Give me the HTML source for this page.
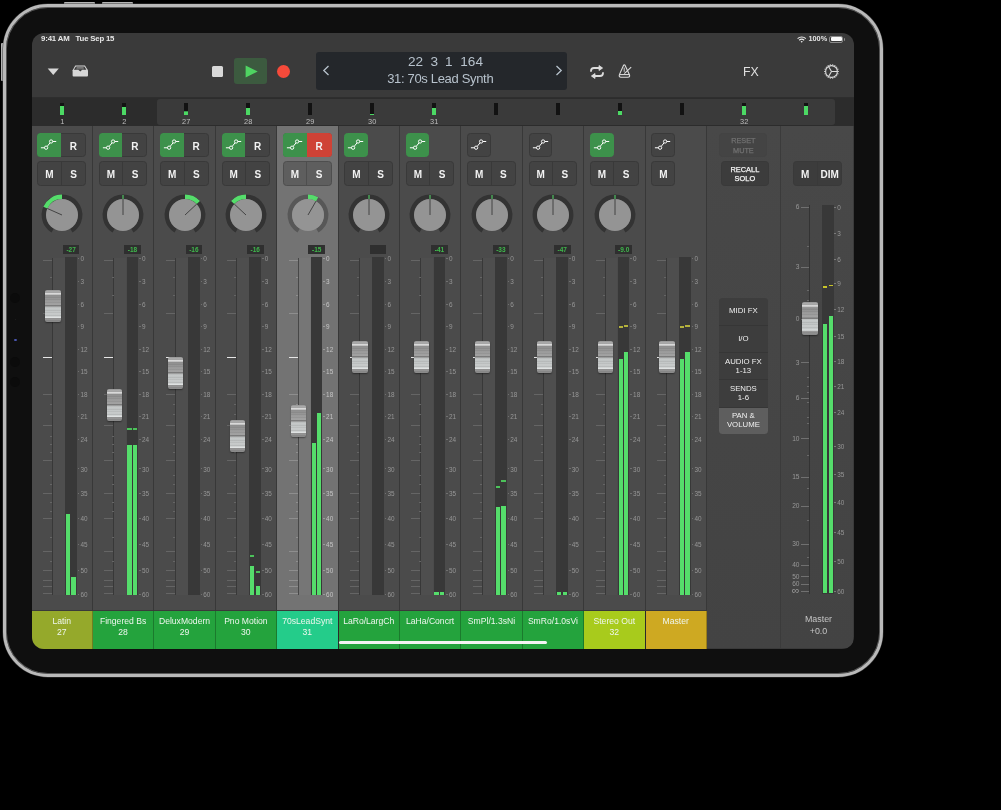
<!DOCTYPE html>
<html><head><meta charset="utf-8"><style>
html,body{margin:0;padding:0;background:#000;width:1001px;height:810px;overflow:hidden}
*{font-family:"Liberation Sans",sans-serif}
.frame{position:absolute;left:2.9px;top:3.6px;width:880.2px;height:673.6px;box-sizing:border-box;border-radius:45px;background:#0f0f0f;border:3.4px solid #b9b9b9;box-shadow:inset 0 0 0 0.9px #5a5a5a, 0 0 0 0.5px #3a3a3a}
.btn{position:absolute;background:#b4b4b4}
.scr{position:absolute;left:32px;top:33px;width:821.5px;height:615.5px;border-radius:12px;overflow:hidden;background:#3a3a3a;will-change:transform}
.a{position:absolute;display:block}
.t{white-space:nowrap;line-height:1.15}
.cap{border-radius:2px;background:repeating-linear-gradient(to bottom,rgba(0,0,0,0) 0px,rgba(0,0,0,0) 1.6px,rgba(0,0,0,0.06) 1.6px,rgba(0,0,0,0.06) 2.6px),linear-gradient(to bottom,#8f8f8f 0%,#a6a6a6 3%,#b0b0b0 8%,#dadada 11%,#cfcfcf 14%,#8f8f8f 17%,#949494 25%,#9c9c9c 35%,#a2a2a2 46%,#767676 49.5%,#8a8a8a 51%,#c9cccc 53%,#c0c4c4 62%,#c8cbcb 72%,#c3c7c7 80%,#dfe2e2 86%,#9a9a9a 89%,#878787 100%);box-shadow:0 1px 1.5px rgba(0,0,0,0.4)}
.dot{position:absolute;border-radius:50%;background:#0b0b0b}
</style></head><body>
<div class="btn" style="left:64px;top:1.8px;width:30.5px;height:3px;border-radius:1px"></div>
<div class="btn" style="left:102px;top:1.8px;width:31px;height:3px;border-radius:1px"></div>
<div class="btn" style="left:1px;top:43px;width:4px;height:37.5px;border-radius:1px"></div>
<div class="frame"></div>
<div class="dot" style="left:10.2px;top:293px;width:10px;height:10px"></div>
<div class="dot" style="left:14.6px;top:319.2px;width:1.3px;height:1.3px;background:#222"></div>
<div class="dot" style="left:13.6px;top:338.6px;width:3px;height:2.6px;background:#4a56b0"></div>
<div class="dot" style="left:10.2px;top:356.5px;width:10px;height:10px"></div>
<div class="dot" style="left:10.2px;top:377.4px;width:10px;height:10px"></div>
<div class="scr">
<div class="a t " style="left:9px;top:2.3px;font-size:7.8px;font-weight:bold;letter-spacing:-0.15px;color:#e8e8e8">9:41 AM</div>
<div class="a t " style="left:43.6px;top:2.3px;font-size:7.8px;font-weight:bold;letter-spacing:-0.2px;color:#e8e8e8">Tue Sep 15</div>
<div class="a t " style="left:776.5px;top:2px;font-size:7.3px;font-weight:bold;color:#e4e4e4">100%</div>
<svg class="a" style="left:765px;top:2.8px;" width="10" height="7" viewBox="0 0 10 7"><path d="M0.6 2.6 A6 6 0 0 1 8.8 2.6" stroke="#eee" stroke-width="1.2" fill="none"/><path d="M2.2 4.2 A3.8 3.8 0 0 1 7.2 4.2" stroke="#eee" stroke-width="1.2" fill="none"/><path d="M3.6 5.6 L4.7 6.8 L5.8 5.6 A1.6 1.6 0 0 0 3.6 5.6Z" fill="#eee"/></svg>
<div class="a " style="left:797.2px;top:2.8px;width:14px;height:6.8px;border:1px solid #8a8a8a;border-radius:2px;box-sizing:border-box;background:#3a3a3a"></div>
<div class="a " style="left:798.5px;top:4.1px;width:11.4px;height:4.2px;background:#fafafa;border-radius:1px"></div>
<div class="a " style="left:811.6px;top:5px;width:1.4px;height:2.6px;background:#8a8a8a;border-radius:0 1px 1px 0"></div>
<svg class="a" style="left:15px;top:35px;" width="13" height="8" viewBox="0 0 13 8"><path d="M0.7 0.4 L11.8 0.4 L6.25 6.9 Z" fill="#d6d6d6"/></svg>
<svg class="a" style="left:39.5px;top:32.4px;" width="16.5" height="12" viewBox="0 0 16.5 12"><path d="M3.3 0.4 L12.9 0.4 L16 5.2 L16 10.6 Q16 11.6 15 11.6 L1.5 11.6 Q0.6 11.6 0.6 10.6 L0.6 5.2 Z" fill="#d6d6d6"/><path d="M3.9 1.5 L12.4 1.5 L14.4 4.8 L10.2 4.8 L8.3 6.6 L6.3 4.8 L1.9 4.8 Z" fill="#3a3a3a"/><rect x="4.6" y="2.2" width="7" height="0.9" fill="#888"/><rect x="4.3" y="3.4" width="7.6" height="0.9" fill="#888"/></svg>
<div class="a " style="left:179.7px;top:32.5px;width:11.3px;height:11.2px;background:#d8d8d8;border-radius:1.5px"></div>
<div class="a " style="left:202px;top:25.1px;width:32.6px;height:26.3px;background:#3c5a3f;border-radius:3px"></div>
<svg class="a" style="left:212.5px;top:32px;" width="13.5" height="13" viewBox="0 0 13.5 13"><path d="M0.6 0.6 L12.7 6.5 L0.6 12.5 Z" fill="#4fd462"/></svg>
<div class="a " style="left:244.7px;top:31.6px;width:13.4px;height:13.4px;background:#f64a3a;border-radius:50%"></div>
<div class="a " style="left:284px;top:19px;width:251px;height:38px;background:#24272b;border-radius:3px"></div>
<div class="a t " style="left:376px;top:21.2px;font-size:13.6px;color:#b7c2cc">22</div>
<div class="a t " style="left:398.4px;top:21.2px;font-size:13.6px;color:#b7c2cc">3</div>
<div class="a t " style="left:413px;top:21.2px;font-size:13.6px;color:#b7c2cc">1</div>
<div class="a t " style="left:428.3px;top:21.2px;font-size:13.6px;color:#b7c2cc">164</div>
<div class="a t " style="left:355.2px;top:38.8px;font-size:13px;letter-spacing:-0.33px;color:#b7c2cc">31: 70s Lead Synth</div>
<svg class="a" style="left:290px;top:32px;" width="8" height="11" viewBox="0 0 8 11"><path d="M6.5 1 L1.8 5.5 L6.5 10" stroke="#b7c2cc" stroke-width="1.3" fill="none"/></svg>
<svg class="a" style="left:523px;top:32px;" width="8" height="11" viewBox="0 0 8 11"><path d="M1.5 1 L6.2 5.5 L1.5 10" stroke="#b7c2cc" stroke-width="1.3" fill="none"/></svg>
<svg class="a" style="left:557px;top:31.5px;" width="16" height="14" viewBox="0 0 16 14"><path d="M2 6 Q2 3 5 3 L12 3" stroke="#dcdcdc" stroke-width="1.8" fill="none" stroke-linecap="round"/><path d="M10 0.5 L13.6 3 L10 5.5 Z" fill="#dcdcdc" stroke="#dcdcdc" stroke-width="0.8" stroke-linejoin="round"/><path d="M14 8 Q14 11 11 11 L4 11" stroke="#dcdcdc" stroke-width="1.8" fill="none" stroke-linecap="round"/><path d="M6 8.5 L2.4 11 L6 13.5 Z" fill="#dcdcdc" stroke="#dcdcdc" stroke-width="0.8" stroke-linejoin="round"/></svg>
<svg class="a" style="left:585.5px;top:30.8px;" width="14" height="14.2" viewBox="0 0 14 14.2"><path d="M5.6 1.2 Q6.3 0.5 7 1.2 L11.2 10.2 Q12.6 13.2 9.8 13.2 L3 13.2 Q0.5 13.2 1.5 10.4 Z" stroke="#dcdcdc" stroke-width="1.1" fill="none" stroke-linejoin="round"/><path d="M1.4 10.6 L11.4 10.6" stroke="#dcdcdc" stroke-width="1.1"/><path d="M6.2 3.6 L6.2 7.8" stroke="#dcdcdc" stroke-width="0.9"/><path d="M6.3 9.6 L13.2 3.2" stroke="#dcdcdc" stroke-width="1.1"/></svg>
<div class="a t " style="left:711px;top:31.6px;font-size:12.3px;color:#e0e0e0">FX</div>
<svg class="a" style="left:792.4px;top:30.9px;" width="15" height="15" viewBox="0 0 15 15"><circle cx="7.5" cy="7.5" r="5.9" stroke="#dcdcdc" stroke-width="1.1" fill="none"/><line x1="13.70" y1="7.50" x2="14.80" y2="7.50" stroke="#dcdcdc" stroke-width="1.1"/><line x1="13.33" y1="9.62" x2="14.36" y2="10.00" stroke="#dcdcdc" stroke-width="1.1"/><line x1="12.25" y1="11.49" x2="13.09" y2="12.19" stroke="#dcdcdc" stroke-width="1.1"/><line x1="10.60" y1="12.87" x2="11.15" y2="13.82" stroke="#dcdcdc" stroke-width="1.1"/><line x1="8.58" y1="13.61" x2="8.77" y2="14.69" stroke="#dcdcdc" stroke-width="1.1"/><line x1="6.42" y1="13.61" x2="6.23" y2="14.69" stroke="#dcdcdc" stroke-width="1.1"/><line x1="4.40" y1="12.87" x2="3.85" y2="13.82" stroke="#dcdcdc" stroke-width="1.1"/><line x1="2.75" y1="11.49" x2="1.91" y2="12.19" stroke="#dcdcdc" stroke-width="1.1"/><line x1="1.67" y1="9.62" x2="0.64" y2="10.00" stroke="#dcdcdc" stroke-width="1.1"/><line x1="1.30" y1="7.50" x2="0.20" y2="7.50" stroke="#dcdcdc" stroke-width="1.1"/><line x1="1.67" y1="5.38" x2="0.64" y2="5.00" stroke="#dcdcdc" stroke-width="1.1"/><line x1="2.75" y1="3.51" x2="1.91" y2="2.81" stroke="#dcdcdc" stroke-width="1.1"/><line x1="4.40" y1="2.13" x2="3.85" y2="1.18" stroke="#dcdcdc" stroke-width="1.1"/><line x1="6.42" y1="1.39" x2="6.23" y2="0.31" stroke="#dcdcdc" stroke-width="1.1"/><line x1="8.58" y1="1.39" x2="8.77" y2="0.31" stroke="#dcdcdc" stroke-width="1.1"/><line x1="10.60" y1="2.13" x2="11.15" y2="1.18" stroke="#dcdcdc" stroke-width="1.1"/><line x1="12.25" y1="3.51" x2="13.09" y2="2.81" stroke="#dcdcdc" stroke-width="1.1"/><line x1="13.33" y1="5.38" x2="14.36" y2="5.00" stroke="#dcdcdc" stroke-width="1.1"/><path d="M7.5 7.5 L13 7.5 M7.5 7.5 L4.7 2.7 M7.5 7.5 L4.7 12.3" stroke="#dcdcdc" stroke-width="1.1"/></svg>
<div class="a " style="left:0px;top:64px;width:821.5px;height:1px;background:#2e2e2e"></div>
<div class="a " style="left:0px;top:65px;width:821.5px;height:28px;background:#2c2c2c"></div>
<div class="a " style="left:125.1px;top:66px;width:678.4px;height:26px;background:#3a3a3a;border-radius:3px"></div>
<div class="a " style="left:28.2px;top:70.4px;width:4px;height:11.6px;background:#121212"></div>
<div class="a " style="left:28.2px;top:73px;width:4px;height:9px;background:#4cd964"></div>
<div class="a t " style="left:20.2px;top:84.6px;width:20px;text-align:center;font-size:7.4px;color:#bdbdbd">1</div>
<div class="a " style="left:90.2px;top:70.4px;width:4px;height:11.6px;background:#121212"></div>
<div class="a " style="left:90.2px;top:74px;width:4px;height:8px;background:#4cd964"></div>
<div class="a t " style="left:82.2px;top:84.6px;width:20px;text-align:center;font-size:7.4px;color:#bdbdbd">2</div>
<div class="a " style="left:152.2px;top:70.4px;width:4px;height:11.6px;background:#121212"></div>
<div class="a " style="left:152.2px;top:79.2px;width:4px;height:2.8px;background:#4cd964"></div>
<div class="a " style="left:152.2px;top:77.8px;width:4px;height:0.8px;background:#3a9a4a"></div>
<div class="a t " style="left:144.2px;top:84.6px;width:20px;text-align:center;font-size:7.4px;color:#bdbdbd">27</div>
<div class="a " style="left:214.2px;top:70.4px;width:4px;height:11.6px;background:#121212"></div>
<div class="a " style="left:214.2px;top:75.4px;width:4px;height:6.6px;background:#4cd964"></div>
<div class="a t " style="left:206.2px;top:84.6px;width:20px;text-align:center;font-size:7.4px;color:#bdbdbd">28</div>
<div class="a " style="left:276.2px;top:70.4px;width:4px;height:11.6px;background:#121212"></div>
<div class="a t " style="left:268.2px;top:84.6px;width:20px;text-align:center;font-size:7.4px;color:#bdbdbd">29</div>
<div class="a " style="left:338.2px;top:70.4px;width:4px;height:11.6px;background:#121212"></div>
<div class="a " style="left:338.2px;top:80.5px;width:4px;height:1.5px;background:#4cd964"></div>
<div class="a t " style="left:330.2px;top:84.6px;width:20px;text-align:center;font-size:7.4px;color:#bdbdbd">30</div>
<div class="a " style="left:400.2px;top:70.4px;width:4px;height:11.6px;background:#121212"></div>
<div class="a " style="left:400.2px;top:75px;width:4px;height:7px;background:#4cd964"></div>
<div class="a t " style="left:392.2px;top:84.6px;width:20px;text-align:center;font-size:7.4px;color:#bdbdbd">31</div>
<div class="a " style="left:462.2px;top:70.4px;width:4px;height:11.6px;background:#121212"></div>
<div class="a " style="left:524.2px;top:70.4px;width:4px;height:11.6px;background:#121212"></div>
<div class="a " style="left:586.2px;top:70.4px;width:4px;height:11.6px;background:#121212"></div>
<div class="a " style="left:586.2px;top:78px;width:4px;height:4px;background:#4cd964"></div>
<div class="a " style="left:648.2px;top:70.4px;width:4px;height:11.6px;background:#121212"></div>
<div class="a " style="left:710.2px;top:70.4px;width:4px;height:11.6px;background:#121212"></div>
<div class="a " style="left:710.2px;top:73px;width:4px;height:9px;background:#4cd964"></div>
<div class="a t " style="left:702.2px;top:84.6px;width:20px;text-align:center;font-size:7.4px;color:#bdbdbd">32</div>
<div class="a " style="left:772.2px;top:70.4px;width:4px;height:11.6px;background:#121212"></div>
<div class="a " style="left:772.2px;top:73px;width:4px;height:9px;background:#4cd964"></div>
<div class="a " style="left:-0.5px;top:93.2px;width:61.4px;height:484.3px;background:#4b4b4b"></div>
<div class="a " style="left:59.9px;top:93.2px;width:1px;height:522.3px;background:#383838"></div>
<div class="a " style="left:5.4px;top:100.1px;width:48.5px;height:23.9px;background:#434343;border-radius:3.5px;border:1px solid #393939;box-sizing:border-box"></div>
<div class="a " style="left:28.9px;top:100.1px;width:25px;height:23.9px;background:transparent;border-radius:0 3.5px 3.5px 0"></div>
<div class="a " style="left:5.4px;top:100.1px;width:23.6px;height:23.9px;background:#3d914b;border-radius:3.5px 0 0 3.5px"></div>
<div class="a t " style="left:29.4px;top:107.9px;width:24px;text-align:center;font-size:10px;font-weight:bold;color:#f2f2f2">R</div>
<svg class="a" style="left:5.4px;top:100.1px;" width="23.6" height="23.9" viewBox="0 0 23.6 23.9"><path d="M3.9 14.8 L7.5 14.8 M10.2 13.4 L13 9.9 M15.7 8.5 L19.2 8.5" stroke="#fff" stroke-width="1" fill="none"/><circle cx="9.1" cy="14.7" r="1.65" stroke="#fff" stroke-width="0.95" fill="none"/><circle cx="14.1" cy="8.5" r="1.65" stroke="#fff" stroke-width="0.95" fill="none"/></svg>
<div class="a " style="left:5.4px;top:128.2px;width:48.5px;height:24.4px;background:#434343;border-radius:3.5px;border:1px solid #393939;box-sizing:border-box"></div>
<div class="a " style="left:28.8px;top:128.2px;width:1px;height:24.4px;background:#393939"></div>
<div class="a t " style="left:5.4px;top:135.8px;width:24px;text-align:center;font-size:10px;font-weight:bold;color:#f2f2f2">M</div>
<div class="a t " style="left:29.6px;top:135.8px;width:24px;text-align:center;font-size:10px;font-weight:bold;color:#f2f2f2">S</div>
<svg class="a" style="left:4.9px;top:156.6px;" width="50" height="50" viewBox="0 0 50 50"><path d="M15.63 40.60 A18.2 18.2 0 1 1 34.37 40.60" stroke="#333333" stroke-width="4.4" fill="none"/><circle cx="25" cy="25" r="16" fill="#949494"/><path d="M25.00 6.80 A18.2 18.2 0 0 0 8.37 17.60" stroke="#55dd6b" stroke-width="4.4" fill="none"/><path d="M25 25 L10.38 18.49" stroke="#3a3a3a" stroke-width="0.9"/></svg>
<div class="a " style="left:30.7px;top:212.3px;width:16.8px;height:8.6px;background:#2f2f2f"></div>
<div class="a t " style="left:30.7px;top:213.2px;width:16.8px;text-align:center;font-size:6.5px;font-weight:bold;line-height:8.8px;color:#3fb84c">-27</div>
<div class="a " style="left:20.8px;top:225px;width:12.1px;height:337px;background:#4e4e4e"></div>
<div class="a " style="left:19.9px;top:224.5px;width:0.85px;height:337px;background:#383838"></div>
<div class="a " style="left:11px;top:226.5px;width:9px;height:1px;background:#656565"></div>
<div class="a " style="left:11px;top:279.5px;width:9px;height:1px;background:#656565"></div>
<div class="a " style="left:11px;top:361px;width:9px;height:1px;background:#656565"></div>
<div class="a " style="left:11px;top:391.8px;width:9px;height:1px;background:#656565"></div>
<div class="a " style="left:11px;top:427px;width:9px;height:1px;background:#656565"></div>
<div class="a " style="left:11px;top:460.2px;width:9px;height:1px;background:#656565"></div>
<div class="a " style="left:11px;top:484.8px;width:9px;height:1px;background:#656565"></div>
<div class="a " style="left:11px;top:518.1px;width:9px;height:1px;background:#656565"></div>
<div class="a " style="left:11px;top:536.5px;width:9px;height:1px;background:#656565"></div>
<div class="a " style="left:11px;top:546.9px;width:9px;height:1px;background:#656565"></div>
<div class="a " style="left:11px;top:552.7px;width:9px;height:1px;background:#656565"></div>
<div class="a " style="left:11px;top:559.8px;width:9px;height:1px;background:#656565"></div>
<div class="a " style="left:18.1px;top:244.2px;width:2px;height:1px;background:#656565"></div>
<div class="a " style="left:18.1px;top:261.7px;width:2px;height:1px;background:#656565"></div>
<div class="a " style="left:18.1px;top:370.8px;width:2px;height:1px;background:#656565"></div>
<div class="a " style="left:18.1px;top:381.2px;width:2px;height:1px;background:#656565"></div>
<div class="a " style="left:18.1px;top:403.2px;width:2px;height:1px;background:#656565"></div>
<div class="a " style="left:18.1px;top:410.9px;width:2px;height:1px;background:#656565"></div>
<div class="a " style="left:18.1px;top:418.7px;width:2px;height:1px;background:#656565"></div>
<div class="a " style="left:18.1px;top:442.1px;width:2px;height:1px;background:#656565"></div>
<div class="a " style="left:18.1px;top:451.4px;width:2px;height:1px;background:#656565"></div>
<div class="a " style="left:18.1px;top:469.4px;width:2px;height:1px;background:#656565"></div>
<div class="a " style="left:18.1px;top:478.3px;width:2px;height:1px;background:#656565"></div>
<div class="a " style="left:18.1px;top:504.3px;width:2px;height:1px;background:#656565"></div>
<div class="a " style="left:18.1px;top:528.1px;width:2px;height:1px;background:#656565"></div>
<div class="a " style="left:11px;top:323.5px;width:9px;height:1.5px;background:#e6e6e6"></div>
<div class="a " style="left:33.2px;top:224.2px;width:11.6px;height:338.2px;background:#383838"></div>
<div class="a " style="left:34px;top:481.2px;width:4.3px;height:80.5px;background:#55dd6b"></div>
<div class="a " style="left:39.3px;top:544px;width:4.6px;height:17.7px;background:#55dd6b"></div>
<div class="a " style="left:45.7px;top:225.1px;width:1.7px;height:0.9px;background:#707070"></div>
<div class="a t " style="left:48.5px;top:222.2px;font-size:6.4px;color:#979797">0</div>
<div class="a " style="left:45.7px;top:247.5px;width:1.7px;height:0.9px;background:#707070"></div>
<div class="a t " style="left:48.5px;top:244.6px;font-size:6.4px;color:#979797">3</div>
<div class="a " style="left:45.7px;top:271px;width:1.7px;height:0.9px;background:#707070"></div>
<div class="a t " style="left:48.5px;top:268.1px;font-size:6.4px;color:#979797">6</div>
<div class="a " style="left:45.7px;top:292.5px;width:1.7px;height:0.9px;background:#707070"></div>
<div class="a t " style="left:48.5px;top:289.6px;font-size:6.4px;color:#979797">9</div>
<div class="a " style="left:45.7px;top:315.7px;width:1.7px;height:0.9px;background:#707070"></div>
<div class="a t " style="left:48.5px;top:312.8px;font-size:6.4px;color:#979797">12</div>
<div class="a " style="left:45.7px;top:338.1px;width:1.7px;height:0.9px;background:#707070"></div>
<div class="a t " style="left:48.5px;top:335.2px;font-size:6.4px;color:#979797">15</div>
<div class="a " style="left:45.7px;top:360.6px;width:1.7px;height:0.9px;background:#707070"></div>
<div class="a t " style="left:48.5px;top:357.7px;font-size:6.4px;color:#979797">18</div>
<div class="a " style="left:45.7px;top:383.2px;width:1.7px;height:0.9px;background:#707070"></div>
<div class="a t " style="left:48.5px;top:380.3px;font-size:6.4px;color:#979797">21</div>
<div class="a " style="left:45.7px;top:405.5px;width:1.7px;height:0.9px;background:#707070"></div>
<div class="a t " style="left:48.5px;top:402.6px;font-size:6.4px;color:#979797">24</div>
<div class="a " style="left:45.7px;top:435.4px;width:1.7px;height:0.9px;background:#707070"></div>
<div class="a t " style="left:48.5px;top:432.5px;font-size:6.4px;color:#979797">30</div>
<div class="a " style="left:45.7px;top:459.9px;width:1.7px;height:0.9px;background:#707070"></div>
<div class="a t " style="left:48.5px;top:457px;font-size:6.4px;color:#979797">35</div>
<div class="a " style="left:45.7px;top:484.6px;width:1.7px;height:0.9px;background:#707070"></div>
<div class="a t " style="left:48.5px;top:481.7px;font-size:6.4px;color:#979797">40</div>
<div class="a " style="left:45.7px;top:511px;width:1.7px;height:0.9px;background:#707070"></div>
<div class="a t " style="left:48.5px;top:508.1px;font-size:6.4px;color:#979797">45</div>
<div class="a " style="left:45.7px;top:536.5px;width:1.7px;height:0.9px;background:#707070"></div>
<div class="a t " style="left:48.5px;top:533.6px;font-size:6.4px;color:#979797">50</div>
<div class="a " style="left:45.7px;top:561.1px;width:1.7px;height:0.9px;background:#707070"></div>
<div class="a t " style="left:48.5px;top:558.2px;font-size:6.4px;color:#979797">60</div>
<div class="a cap" style="left:13.4px;top:257px;width:15.3px;height:32.2px;"></div>
<div class="a " style="left:-0.5px;top:577.5px;width:61.4px;height:38px;background:#95a92b"></div>
<div class="a t " style="left:-0.5px;top:582.6px;width:60.4px;text-align:center;font-size:8.6px;line-height:11.6px;color:#eef6ee">Latin<br>27</div>
<div class="a " style="left:59.9px;top:577.5px;width:1px;height:38px;background:rgba(0,0,0,0.25)"></div>
<div class="a " style="left:60.9px;top:93.2px;width:61.4px;height:484.3px;background:#4b4b4b"></div>
<div class="a " style="left:121.3px;top:93.2px;width:1px;height:522.3px;background:#383838"></div>
<div class="a " style="left:66.8px;top:100.1px;width:48.5px;height:23.9px;background:#434343;border-radius:3.5px;border:1px solid #393939;box-sizing:border-box"></div>
<div class="a " style="left:90.3px;top:100.1px;width:25px;height:23.9px;background:transparent;border-radius:0 3.5px 3.5px 0"></div>
<div class="a " style="left:66.8px;top:100.1px;width:23.6px;height:23.9px;background:#3d914b;border-radius:3.5px 0 0 3.5px"></div>
<div class="a t " style="left:90.8px;top:107.9px;width:24px;text-align:center;font-size:10px;font-weight:bold;color:#f2f2f2">R</div>
<svg class="a" style="left:66.8px;top:100.1px;" width="23.6" height="23.9" viewBox="0 0 23.6 23.9"><path d="M3.9 14.8 L7.5 14.8 M10.2 13.4 L13 9.9 M15.7 8.5 L19.2 8.5" stroke="#fff" stroke-width="1" fill="none"/><circle cx="9.1" cy="14.7" r="1.65" stroke="#fff" stroke-width="0.95" fill="none"/><circle cx="14.1" cy="8.5" r="1.65" stroke="#fff" stroke-width="0.95" fill="none"/></svg>
<div class="a " style="left:66.8px;top:128.2px;width:48.5px;height:24.4px;background:#434343;border-radius:3.5px;border:1px solid #393939;box-sizing:border-box"></div>
<div class="a " style="left:90.2px;top:128.2px;width:1px;height:24.4px;background:#393939"></div>
<div class="a t " style="left:66.8px;top:135.8px;width:24px;text-align:center;font-size:10px;font-weight:bold;color:#f2f2f2">M</div>
<div class="a t " style="left:91px;top:135.8px;width:24px;text-align:center;font-size:10px;font-weight:bold;color:#f2f2f2">S</div>
<svg class="a" style="left:66.3px;top:156.6px;" width="50" height="50" viewBox="0 0 50 50"><path d="M15.63 40.60 A18.2 18.2 0 1 1 34.37 40.60" stroke="#333333" stroke-width="4.4" fill="none"/><circle cx="25" cy="25" r="16" fill="#949494"/><path d="M25 5 L25 9" stroke="#55dd6b" stroke-width="1" /><path d="M25 25 L25.00 9.00" stroke="#3a3a3a" stroke-width="0.9"/></svg>
<div class="a " style="left:92.1px;top:212.3px;width:16.8px;height:8.6px;background:#2f2f2f"></div>
<div class="a t " style="left:92.1px;top:213.2px;width:16.8px;text-align:center;font-size:6.5px;font-weight:bold;line-height:8.8px;color:#3fb84c">-18</div>
<div class="a " style="left:82.2px;top:225px;width:12.1px;height:337px;background:#4e4e4e"></div>
<div class="a " style="left:81.3px;top:224.5px;width:0.85px;height:337px;background:#383838"></div>
<div class="a " style="left:72.4px;top:226.5px;width:9px;height:1px;background:#656565"></div>
<div class="a " style="left:72.4px;top:279.5px;width:9px;height:1px;background:#656565"></div>
<div class="a " style="left:72.4px;top:361px;width:9px;height:1px;background:#656565"></div>
<div class="a " style="left:72.4px;top:391.8px;width:9px;height:1px;background:#656565"></div>
<div class="a " style="left:72.4px;top:427px;width:9px;height:1px;background:#656565"></div>
<div class="a " style="left:72.4px;top:460.2px;width:9px;height:1px;background:#656565"></div>
<div class="a " style="left:72.4px;top:484.8px;width:9px;height:1px;background:#656565"></div>
<div class="a " style="left:72.4px;top:518.1px;width:9px;height:1px;background:#656565"></div>
<div class="a " style="left:72.4px;top:536.5px;width:9px;height:1px;background:#656565"></div>
<div class="a " style="left:72.4px;top:546.9px;width:9px;height:1px;background:#656565"></div>
<div class="a " style="left:72.4px;top:552.7px;width:9px;height:1px;background:#656565"></div>
<div class="a " style="left:72.4px;top:559.8px;width:9px;height:1px;background:#656565"></div>
<div class="a " style="left:79.5px;top:244.2px;width:2px;height:1px;background:#656565"></div>
<div class="a " style="left:79.5px;top:261.7px;width:2px;height:1px;background:#656565"></div>
<div class="a " style="left:79.5px;top:370.8px;width:2px;height:1px;background:#656565"></div>
<div class="a " style="left:79.5px;top:381.2px;width:2px;height:1px;background:#656565"></div>
<div class="a " style="left:79.5px;top:403.2px;width:2px;height:1px;background:#656565"></div>
<div class="a " style="left:79.5px;top:410.9px;width:2px;height:1px;background:#656565"></div>
<div class="a " style="left:79.5px;top:418.7px;width:2px;height:1px;background:#656565"></div>
<div class="a " style="left:79.5px;top:442.1px;width:2px;height:1px;background:#656565"></div>
<div class="a " style="left:79.5px;top:451.4px;width:2px;height:1px;background:#656565"></div>
<div class="a " style="left:79.5px;top:469.4px;width:2px;height:1px;background:#656565"></div>
<div class="a " style="left:79.5px;top:478.3px;width:2px;height:1px;background:#656565"></div>
<div class="a " style="left:79.5px;top:504.3px;width:2px;height:1px;background:#656565"></div>
<div class="a " style="left:79.5px;top:528.1px;width:2px;height:1px;background:#656565"></div>
<div class="a " style="left:72.4px;top:323.5px;width:9px;height:1.5px;background:#e6e6e6"></div>
<div class="a " style="left:94.6px;top:224.2px;width:11.6px;height:338.2px;background:#383838"></div>
<div class="a " style="left:95.4px;top:412.2px;width:4.3px;height:149.5px;background:#55dd6b"></div>
<div class="a " style="left:95.4px;top:394.9px;width:4.3px;height:1.8px;background:#4cc25a"></div>
<div class="a " style="left:100.7px;top:412.2px;width:4.6px;height:149.5px;background:#55dd6b"></div>
<div class="a " style="left:100.7px;top:394.9px;width:4.6px;height:1.8px;background:#4cc25a"></div>
<div class="a " style="left:107.1px;top:225.1px;width:1.7px;height:0.9px;background:#707070"></div>
<div class="a t " style="left:109.9px;top:222.2px;font-size:6.4px;color:#979797">0</div>
<div class="a " style="left:107.1px;top:247.5px;width:1.7px;height:0.9px;background:#707070"></div>
<div class="a t " style="left:109.9px;top:244.6px;font-size:6.4px;color:#979797">3</div>
<div class="a " style="left:107.1px;top:271px;width:1.7px;height:0.9px;background:#707070"></div>
<div class="a t " style="left:109.9px;top:268.1px;font-size:6.4px;color:#979797">6</div>
<div class="a " style="left:107.1px;top:292.5px;width:1.7px;height:0.9px;background:#707070"></div>
<div class="a t " style="left:109.9px;top:289.6px;font-size:6.4px;color:#979797">9</div>
<div class="a " style="left:107.1px;top:315.7px;width:1.7px;height:0.9px;background:#707070"></div>
<div class="a t " style="left:109.9px;top:312.8px;font-size:6.4px;color:#979797">12</div>
<div class="a " style="left:107.1px;top:338.1px;width:1.7px;height:0.9px;background:#707070"></div>
<div class="a t " style="left:109.9px;top:335.2px;font-size:6.4px;color:#979797">15</div>
<div class="a " style="left:107.1px;top:360.6px;width:1.7px;height:0.9px;background:#707070"></div>
<div class="a t " style="left:109.9px;top:357.7px;font-size:6.4px;color:#979797">18</div>
<div class="a " style="left:107.1px;top:383.2px;width:1.7px;height:0.9px;background:#707070"></div>
<div class="a t " style="left:109.9px;top:380.3px;font-size:6.4px;color:#979797">21</div>
<div class="a " style="left:107.1px;top:405.5px;width:1.7px;height:0.9px;background:#707070"></div>
<div class="a t " style="left:109.9px;top:402.6px;font-size:6.4px;color:#979797">24</div>
<div class="a " style="left:107.1px;top:435.4px;width:1.7px;height:0.9px;background:#707070"></div>
<div class="a t " style="left:109.9px;top:432.5px;font-size:6.4px;color:#979797">30</div>
<div class="a " style="left:107.1px;top:459.9px;width:1.7px;height:0.9px;background:#707070"></div>
<div class="a t " style="left:109.9px;top:457px;font-size:6.4px;color:#979797">35</div>
<div class="a " style="left:107.1px;top:484.6px;width:1.7px;height:0.9px;background:#707070"></div>
<div class="a t " style="left:109.9px;top:481.7px;font-size:6.4px;color:#979797">40</div>
<div class="a " style="left:107.1px;top:511px;width:1.7px;height:0.9px;background:#707070"></div>
<div class="a t " style="left:109.9px;top:508.1px;font-size:6.4px;color:#979797">45</div>
<div class="a " style="left:107.1px;top:536.5px;width:1.7px;height:0.9px;background:#707070"></div>
<div class="a t " style="left:109.9px;top:533.6px;font-size:6.4px;color:#979797">50</div>
<div class="a " style="left:107.1px;top:561.1px;width:1.7px;height:0.9px;background:#707070"></div>
<div class="a t " style="left:109.9px;top:558.2px;font-size:6.4px;color:#979797">60</div>
<div class="a cap" style="left:74.8px;top:356px;width:15.3px;height:32.2px;"></div>
<div class="a " style="left:60.9px;top:577.5px;width:61.4px;height:38px;background:#24a33d"></div>
<div class="a t " style="left:60.9px;top:582.6px;width:60.4px;text-align:center;font-size:8.6px;line-height:11.6px;color:#eef6ee">Fingered Bs<br>28</div>
<div class="a " style="left:121.3px;top:577.5px;width:1px;height:38px;background:rgba(0,0,0,0.25)"></div>
<div class="a " style="left:122.3px;top:93.2px;width:61.4px;height:484.3px;background:#4b4b4b"></div>
<div class="a " style="left:182.7px;top:93.2px;width:1px;height:522.3px;background:#383838"></div>
<div class="a " style="left:128.2px;top:100.1px;width:48.5px;height:23.9px;background:#434343;border-radius:3.5px;border:1px solid #393939;box-sizing:border-box"></div>
<div class="a " style="left:151.7px;top:100.1px;width:25px;height:23.9px;background:transparent;border-radius:0 3.5px 3.5px 0"></div>
<div class="a " style="left:128.2px;top:100.1px;width:23.6px;height:23.9px;background:#3d914b;border-radius:3.5px 0 0 3.5px"></div>
<div class="a t " style="left:152.2px;top:107.9px;width:24px;text-align:center;font-size:10px;font-weight:bold;color:#f2f2f2">R</div>
<svg class="a" style="left:128.2px;top:100.1px;" width="23.6" height="23.9" viewBox="0 0 23.6 23.9"><path d="M3.9 14.8 L7.5 14.8 M10.2 13.4 L13 9.9 M15.7 8.5 L19.2 8.5" stroke="#fff" stroke-width="1" fill="none"/><circle cx="9.1" cy="14.7" r="1.65" stroke="#fff" stroke-width="0.95" fill="none"/><circle cx="14.1" cy="8.5" r="1.65" stroke="#fff" stroke-width="0.95" fill="none"/></svg>
<div class="a " style="left:128.2px;top:128.2px;width:48.5px;height:24.4px;background:#434343;border-radius:3.5px;border:1px solid #393939;box-sizing:border-box"></div>
<div class="a " style="left:151.6px;top:128.2px;width:1px;height:24.4px;background:#393939"></div>
<div class="a t " style="left:128.2px;top:135.8px;width:24px;text-align:center;font-size:10px;font-weight:bold;color:#f2f2f2">M</div>
<div class="a t " style="left:152.4px;top:135.8px;width:24px;text-align:center;font-size:10px;font-weight:bold;color:#f2f2f2">S</div>
<svg class="a" style="left:127.7px;top:156.6px;" width="50" height="50" viewBox="0 0 50 50"><path d="M15.63 40.60 A18.2 18.2 0 1 1 34.37 40.60" stroke="#333333" stroke-width="4.4" fill="none"/><circle cx="25" cy="25" r="16" fill="#949494"/><path d="M25.00 6.80 A18.2 18.2 0 0 1 38.31 12.59" stroke="#55dd6b" stroke-width="4.4" fill="none"/><path d="M25 25 L36.70 14.09" stroke="#3a3a3a" stroke-width="0.9"/></svg>
<div class="a " style="left:153.5px;top:212.3px;width:16.8px;height:8.6px;background:#2f2f2f"></div>
<div class="a t " style="left:153.5px;top:213.2px;width:16.8px;text-align:center;font-size:6.5px;font-weight:bold;line-height:8.8px;color:#3fb84c">-16</div>
<div class="a " style="left:143.6px;top:225px;width:12.1px;height:337px;background:#4e4e4e"></div>
<div class="a " style="left:142.7px;top:224.5px;width:0.85px;height:337px;background:#383838"></div>
<div class="a " style="left:133.8px;top:226.5px;width:9px;height:1px;background:#656565"></div>
<div class="a " style="left:133.8px;top:279.5px;width:9px;height:1px;background:#656565"></div>
<div class="a " style="left:133.8px;top:361px;width:9px;height:1px;background:#656565"></div>
<div class="a " style="left:133.8px;top:391.8px;width:9px;height:1px;background:#656565"></div>
<div class="a " style="left:133.8px;top:427px;width:9px;height:1px;background:#656565"></div>
<div class="a " style="left:133.8px;top:460.2px;width:9px;height:1px;background:#656565"></div>
<div class="a " style="left:133.8px;top:484.8px;width:9px;height:1px;background:#656565"></div>
<div class="a " style="left:133.8px;top:518.1px;width:9px;height:1px;background:#656565"></div>
<div class="a " style="left:133.8px;top:536.5px;width:9px;height:1px;background:#656565"></div>
<div class="a " style="left:133.8px;top:546.9px;width:9px;height:1px;background:#656565"></div>
<div class="a " style="left:133.8px;top:552.7px;width:9px;height:1px;background:#656565"></div>
<div class="a " style="left:133.8px;top:559.8px;width:9px;height:1px;background:#656565"></div>
<div class="a " style="left:140.9px;top:244.2px;width:2px;height:1px;background:#656565"></div>
<div class="a " style="left:140.9px;top:261.7px;width:2px;height:1px;background:#656565"></div>
<div class="a " style="left:140.9px;top:370.8px;width:2px;height:1px;background:#656565"></div>
<div class="a " style="left:140.9px;top:381.2px;width:2px;height:1px;background:#656565"></div>
<div class="a " style="left:140.9px;top:403.2px;width:2px;height:1px;background:#656565"></div>
<div class="a " style="left:140.9px;top:410.9px;width:2px;height:1px;background:#656565"></div>
<div class="a " style="left:140.9px;top:418.7px;width:2px;height:1px;background:#656565"></div>
<div class="a " style="left:140.9px;top:442.1px;width:2px;height:1px;background:#656565"></div>
<div class="a " style="left:140.9px;top:451.4px;width:2px;height:1px;background:#656565"></div>
<div class="a " style="left:140.9px;top:469.4px;width:2px;height:1px;background:#656565"></div>
<div class="a " style="left:140.9px;top:478.3px;width:2px;height:1px;background:#656565"></div>
<div class="a " style="left:140.9px;top:504.3px;width:2px;height:1px;background:#656565"></div>
<div class="a " style="left:140.9px;top:528.1px;width:2px;height:1px;background:#656565"></div>
<div class="a " style="left:133.8px;top:323.5px;width:9px;height:1.5px;background:#e6e6e6"></div>
<div class="a " style="left:156px;top:224.2px;width:11.6px;height:338.2px;background:#383838"></div>
<div class="a " style="left:168.5px;top:225.1px;width:1.7px;height:0.9px;background:#707070"></div>
<div class="a t " style="left:171.3px;top:222.2px;font-size:6.4px;color:#979797">0</div>
<div class="a " style="left:168.5px;top:247.5px;width:1.7px;height:0.9px;background:#707070"></div>
<div class="a t " style="left:171.3px;top:244.6px;font-size:6.4px;color:#979797">3</div>
<div class="a " style="left:168.5px;top:271px;width:1.7px;height:0.9px;background:#707070"></div>
<div class="a t " style="left:171.3px;top:268.1px;font-size:6.4px;color:#979797">6</div>
<div class="a " style="left:168.5px;top:292.5px;width:1.7px;height:0.9px;background:#707070"></div>
<div class="a t " style="left:171.3px;top:289.6px;font-size:6.4px;color:#979797">9</div>
<div class="a " style="left:168.5px;top:315.7px;width:1.7px;height:0.9px;background:#707070"></div>
<div class="a t " style="left:171.3px;top:312.8px;font-size:6.4px;color:#979797">12</div>
<div class="a " style="left:168.5px;top:338.1px;width:1.7px;height:0.9px;background:#707070"></div>
<div class="a t " style="left:171.3px;top:335.2px;font-size:6.4px;color:#979797">15</div>
<div class="a " style="left:168.5px;top:360.6px;width:1.7px;height:0.9px;background:#707070"></div>
<div class="a t " style="left:171.3px;top:357.7px;font-size:6.4px;color:#979797">18</div>
<div class="a " style="left:168.5px;top:383.2px;width:1.7px;height:0.9px;background:#707070"></div>
<div class="a t " style="left:171.3px;top:380.3px;font-size:6.4px;color:#979797">21</div>
<div class="a " style="left:168.5px;top:405.5px;width:1.7px;height:0.9px;background:#707070"></div>
<div class="a t " style="left:171.3px;top:402.6px;font-size:6.4px;color:#979797">24</div>
<div class="a " style="left:168.5px;top:435.4px;width:1.7px;height:0.9px;background:#707070"></div>
<div class="a t " style="left:171.3px;top:432.5px;font-size:6.4px;color:#979797">30</div>
<div class="a " style="left:168.5px;top:459.9px;width:1.7px;height:0.9px;background:#707070"></div>
<div class="a t " style="left:171.3px;top:457px;font-size:6.4px;color:#979797">35</div>
<div class="a " style="left:168.5px;top:484.6px;width:1.7px;height:0.9px;background:#707070"></div>
<div class="a t " style="left:171.3px;top:481.7px;font-size:6.4px;color:#979797">40</div>
<div class="a " style="left:168.5px;top:511px;width:1.7px;height:0.9px;background:#707070"></div>
<div class="a t " style="left:171.3px;top:508.1px;font-size:6.4px;color:#979797">45</div>
<div class="a " style="left:168.5px;top:536.5px;width:1.7px;height:0.9px;background:#707070"></div>
<div class="a t " style="left:171.3px;top:533.6px;font-size:6.4px;color:#979797">50</div>
<div class="a " style="left:168.5px;top:561.1px;width:1.7px;height:0.9px;background:#707070"></div>
<div class="a t " style="left:171.3px;top:558.2px;font-size:6.4px;color:#979797">60</div>
<div class="a cap" style="left:136.2px;top:323.8px;width:15.3px;height:32.2px;"></div>
<div class="a " style="left:122.3px;top:577.5px;width:61.4px;height:38px;background:#24a33d"></div>
<div class="a t " style="left:122.3px;top:582.6px;width:60.4px;text-align:center;font-size:8.6px;line-height:11.6px;color:#eef6ee">DeluxModern<br>29</div>
<div class="a " style="left:182.7px;top:577.5px;width:1px;height:38px;background:rgba(0,0,0,0.25)"></div>
<div class="a " style="left:183.7px;top:93.2px;width:61.4px;height:484.3px;background:#4b4b4b"></div>
<div class="a " style="left:244.1px;top:93.2px;width:1px;height:522.3px;background:#383838"></div>
<div class="a " style="left:189.6px;top:100.1px;width:48.5px;height:23.9px;background:#434343;border-radius:3.5px;border:1px solid #393939;box-sizing:border-box"></div>
<div class="a " style="left:213.1px;top:100.1px;width:25px;height:23.9px;background:transparent;border-radius:0 3.5px 3.5px 0"></div>
<div class="a " style="left:189.6px;top:100.1px;width:23.6px;height:23.9px;background:#3d914b;border-radius:3.5px 0 0 3.5px"></div>
<div class="a t " style="left:213.6px;top:107.9px;width:24px;text-align:center;font-size:10px;font-weight:bold;color:#f2f2f2">R</div>
<svg class="a" style="left:189.6px;top:100.1px;" width="23.6" height="23.9" viewBox="0 0 23.6 23.9"><path d="M3.9 14.8 L7.5 14.8 M10.2 13.4 L13 9.9 M15.7 8.5 L19.2 8.5" stroke="#fff" stroke-width="1" fill="none"/><circle cx="9.1" cy="14.7" r="1.65" stroke="#fff" stroke-width="0.95" fill="none"/><circle cx="14.1" cy="8.5" r="1.65" stroke="#fff" stroke-width="0.95" fill="none"/></svg>
<div class="a " style="left:189.6px;top:128.2px;width:48.5px;height:24.4px;background:#434343;border-radius:3.5px;border:1px solid #393939;box-sizing:border-box"></div>
<div class="a " style="left:213px;top:128.2px;width:1px;height:24.4px;background:#393939"></div>
<div class="a t " style="left:189.6px;top:135.8px;width:24px;text-align:center;font-size:10px;font-weight:bold;color:#f2f2f2">M</div>
<div class="a t " style="left:213.8px;top:135.8px;width:24px;text-align:center;font-size:10px;font-weight:bold;color:#f2f2f2">S</div>
<svg class="a" style="left:189.1px;top:156.6px;" width="50" height="50" viewBox="0 0 50 50"><path d="M15.63 40.60 A18.2 18.2 0 1 1 34.37 40.60" stroke="#333333" stroke-width="4.4" fill="none"/><circle cx="25" cy="25" r="16" fill="#949494"/><path d="M25.00 6.80 A18.2 18.2 0 0 0 11.69 12.59" stroke="#55dd6b" stroke-width="4.4" fill="none"/><path d="M25 25 L13.30 14.09" stroke="#3a3a3a" stroke-width="0.9"/></svg>
<div class="a " style="left:214.9px;top:212.3px;width:16.8px;height:8.6px;background:#2f2f2f"></div>
<div class="a t " style="left:214.9px;top:213.2px;width:16.8px;text-align:center;font-size:6.5px;font-weight:bold;line-height:8.8px;color:#3fb84c">-16</div>
<div class="a " style="left:205px;top:225px;width:12.1px;height:337px;background:#4e4e4e"></div>
<div class="a " style="left:204.1px;top:224.5px;width:0.85px;height:337px;background:#383838"></div>
<div class="a " style="left:195.2px;top:226.5px;width:9px;height:1px;background:#656565"></div>
<div class="a " style="left:195.2px;top:279.5px;width:9px;height:1px;background:#656565"></div>
<div class="a " style="left:195.2px;top:361px;width:9px;height:1px;background:#656565"></div>
<div class="a " style="left:195.2px;top:391.8px;width:9px;height:1px;background:#656565"></div>
<div class="a " style="left:195.2px;top:427px;width:9px;height:1px;background:#656565"></div>
<div class="a " style="left:195.2px;top:460.2px;width:9px;height:1px;background:#656565"></div>
<div class="a " style="left:195.2px;top:484.8px;width:9px;height:1px;background:#656565"></div>
<div class="a " style="left:195.2px;top:518.1px;width:9px;height:1px;background:#656565"></div>
<div class="a " style="left:195.2px;top:536.5px;width:9px;height:1px;background:#656565"></div>
<div class="a " style="left:195.2px;top:546.9px;width:9px;height:1px;background:#656565"></div>
<div class="a " style="left:195.2px;top:552.7px;width:9px;height:1px;background:#656565"></div>
<div class="a " style="left:195.2px;top:559.8px;width:9px;height:1px;background:#656565"></div>
<div class="a " style="left:202.3px;top:244.2px;width:2px;height:1px;background:#656565"></div>
<div class="a " style="left:202.3px;top:261.7px;width:2px;height:1px;background:#656565"></div>
<div class="a " style="left:202.3px;top:370.8px;width:2px;height:1px;background:#656565"></div>
<div class="a " style="left:202.3px;top:381.2px;width:2px;height:1px;background:#656565"></div>
<div class="a " style="left:202.3px;top:403.2px;width:2px;height:1px;background:#656565"></div>
<div class="a " style="left:202.3px;top:410.9px;width:2px;height:1px;background:#656565"></div>
<div class="a " style="left:202.3px;top:418.7px;width:2px;height:1px;background:#656565"></div>
<div class="a " style="left:202.3px;top:442.1px;width:2px;height:1px;background:#656565"></div>
<div class="a " style="left:202.3px;top:451.4px;width:2px;height:1px;background:#656565"></div>
<div class="a " style="left:202.3px;top:469.4px;width:2px;height:1px;background:#656565"></div>
<div class="a " style="left:202.3px;top:478.3px;width:2px;height:1px;background:#656565"></div>
<div class="a " style="left:202.3px;top:504.3px;width:2px;height:1px;background:#656565"></div>
<div class="a " style="left:202.3px;top:528.1px;width:2px;height:1px;background:#656565"></div>
<div class="a " style="left:195.2px;top:323.5px;width:9px;height:1.5px;background:#e6e6e6"></div>
<div class="a " style="left:217.4px;top:224.2px;width:11.6px;height:338.2px;background:#383838"></div>
<div class="a " style="left:218.2px;top:532.6px;width:4.3px;height:29.1px;background:#55dd6b"></div>
<div class="a " style="left:218.2px;top:522.3px;width:4.3px;height:1.8px;background:#4cc25a"></div>
<div class="a " style="left:223.5px;top:552.6px;width:4.6px;height:9.1px;background:#55dd6b"></div>
<div class="a " style="left:223.5px;top:538.3px;width:4.6px;height:1.8px;background:#4cc25a"></div>
<div class="a " style="left:229.9px;top:225.1px;width:1.7px;height:0.9px;background:#707070"></div>
<div class="a t " style="left:232.7px;top:222.2px;font-size:6.4px;color:#979797">0</div>
<div class="a " style="left:229.9px;top:247.5px;width:1.7px;height:0.9px;background:#707070"></div>
<div class="a t " style="left:232.7px;top:244.6px;font-size:6.4px;color:#979797">3</div>
<div class="a " style="left:229.9px;top:271px;width:1.7px;height:0.9px;background:#707070"></div>
<div class="a t " style="left:232.7px;top:268.1px;font-size:6.4px;color:#979797">6</div>
<div class="a " style="left:229.9px;top:292.5px;width:1.7px;height:0.9px;background:#707070"></div>
<div class="a t " style="left:232.7px;top:289.6px;font-size:6.4px;color:#979797">9</div>
<div class="a " style="left:229.9px;top:315.7px;width:1.7px;height:0.9px;background:#707070"></div>
<div class="a t " style="left:232.7px;top:312.8px;font-size:6.4px;color:#979797">12</div>
<div class="a " style="left:229.9px;top:338.1px;width:1.7px;height:0.9px;background:#707070"></div>
<div class="a t " style="left:232.7px;top:335.2px;font-size:6.4px;color:#979797">15</div>
<div class="a " style="left:229.9px;top:360.6px;width:1.7px;height:0.9px;background:#707070"></div>
<div class="a t " style="left:232.7px;top:357.7px;font-size:6.4px;color:#979797">18</div>
<div class="a " style="left:229.9px;top:383.2px;width:1.7px;height:0.9px;background:#707070"></div>
<div class="a t " style="left:232.7px;top:380.3px;font-size:6.4px;color:#979797">21</div>
<div class="a " style="left:229.9px;top:405.5px;width:1.7px;height:0.9px;background:#707070"></div>
<div class="a t " style="left:232.7px;top:402.6px;font-size:6.4px;color:#979797">24</div>
<div class="a " style="left:229.9px;top:435.4px;width:1.7px;height:0.9px;background:#707070"></div>
<div class="a t " style="left:232.7px;top:432.5px;font-size:6.4px;color:#979797">30</div>
<div class="a " style="left:229.9px;top:459.9px;width:1.7px;height:0.9px;background:#707070"></div>
<div class="a t " style="left:232.7px;top:457px;font-size:6.4px;color:#979797">35</div>
<div class="a " style="left:229.9px;top:484.6px;width:1.7px;height:0.9px;background:#707070"></div>
<div class="a t " style="left:232.7px;top:481.7px;font-size:6.4px;color:#979797">40</div>
<div class="a " style="left:229.9px;top:511px;width:1.7px;height:0.9px;background:#707070"></div>
<div class="a t " style="left:232.7px;top:508.1px;font-size:6.4px;color:#979797">45</div>
<div class="a " style="left:229.9px;top:536.5px;width:1.7px;height:0.9px;background:#707070"></div>
<div class="a t " style="left:232.7px;top:533.6px;font-size:6.4px;color:#979797">50</div>
<div class="a " style="left:229.9px;top:561.1px;width:1.7px;height:0.9px;background:#707070"></div>
<div class="a t " style="left:232.7px;top:558.2px;font-size:6.4px;color:#979797">60</div>
<div class="a cap" style="left:197.6px;top:386.5px;width:15.3px;height:32.2px;"></div>
<div class="a " style="left:183.7px;top:577.5px;width:61.4px;height:38px;background:#24a33d"></div>
<div class="a t " style="left:183.7px;top:582.6px;width:60.4px;text-align:center;font-size:8.6px;line-height:11.6px;color:#eef6ee">Pno Motion<br>30</div>
<div class="a " style="left:244.1px;top:577.5px;width:1px;height:38px;background:rgba(0,0,0,0.25)"></div>
<div class="a " style="left:245.1px;top:93.2px;width:61.4px;height:484.3px;background:#737373"></div>
<div class="a " style="left:305.5px;top:93.2px;width:1px;height:522.3px;background:#383838"></div>
<div class="a " style="left:251px;top:100.1px;width:48.5px;height:23.9px;background:#5e5e5e;border-radius:3.5px;border:1px solid #4e4e4e;box-sizing:border-box"></div>
<div class="a " style="left:274.5px;top:100.1px;width:25px;height:23.9px;background:#cf4236;border-radius:0 3.5px 3.5px 0"></div>
<div class="a " style="left:251px;top:100.1px;width:23.6px;height:23.9px;background:#3d914b;border-radius:3.5px 0 0 3.5px"></div>
<div class="a t " style="left:275px;top:107.9px;width:24px;text-align:center;font-size:10px;font-weight:bold;color:#f2f2f2">R</div>
<svg class="a" style="left:251px;top:100.1px;" width="23.6" height="23.9" viewBox="0 0 23.6 23.9"><path d="M3.9 14.8 L7.5 14.8 M10.2 13.4 L13 9.9 M15.7 8.5 L19.2 8.5" stroke="#fff" stroke-width="1" fill="none"/><circle cx="9.1" cy="14.7" r="1.65" stroke="#fff" stroke-width="0.95" fill="none"/><circle cx="14.1" cy="8.5" r="1.65" stroke="#fff" stroke-width="0.95" fill="none"/></svg>
<div class="a " style="left:251px;top:128.2px;width:48.5px;height:24.4px;background:#5e5e5e;border-radius:3.5px;border:1px solid #4e4e4e;box-sizing:border-box"></div>
<div class="a " style="left:274.4px;top:128.2px;width:1px;height:24.4px;background:#4e4e4e"></div>
<div class="a t " style="left:251px;top:135.8px;width:24px;text-align:center;font-size:10px;font-weight:bold;color:#f2f2f2">M</div>
<div class="a t " style="left:275.2px;top:135.8px;width:24px;text-align:center;font-size:10px;font-weight:bold;color:#f2f2f2">S</div>
<svg class="a" style="left:250.5px;top:156.6px;" width="50" height="50" viewBox="0 0 50 50"><path d="M15.63 40.60 A18.2 18.2 0 1 1 34.37 40.60" stroke="#575757" stroke-width="4.4" fill="none"/><circle cx="25" cy="25" r="16" fill="#949494"/><path d="M25.00 6.80 A18.2 18.2 0 0 1 34.10 9.24" stroke="#55dd6b" stroke-width="4.4" fill="none"/><path d="M25 25 L33.00 11.14" stroke="#3a3a3a" stroke-width="0.9"/></svg>
<div class="a " style="left:276.3px;top:212.3px;width:16.8px;height:8.6px;background:#2f2f2f"></div>
<div class="a t " style="left:276.3px;top:213.2px;width:16.8px;text-align:center;font-size:6.5px;font-weight:bold;line-height:8.8px;color:#3fb84c">-15</div>
<div class="a " style="left:266.4px;top:225px;width:12.1px;height:337px;background:#767676"></div>
<div class="a " style="left:265.5px;top:224.5px;width:0.85px;height:337px;background:#474747"></div>
<div class="a " style="left:256.6px;top:226.5px;width:9px;height:1px;background:#8e8e8e"></div>
<div class="a " style="left:256.6px;top:279.5px;width:9px;height:1px;background:#8e8e8e"></div>
<div class="a " style="left:256.6px;top:361px;width:9px;height:1px;background:#8e8e8e"></div>
<div class="a " style="left:256.6px;top:391.8px;width:9px;height:1px;background:#8e8e8e"></div>
<div class="a " style="left:256.6px;top:427px;width:9px;height:1px;background:#8e8e8e"></div>
<div class="a " style="left:256.6px;top:460.2px;width:9px;height:1px;background:#8e8e8e"></div>
<div class="a " style="left:256.6px;top:484.8px;width:9px;height:1px;background:#8e8e8e"></div>
<div class="a " style="left:256.6px;top:518.1px;width:9px;height:1px;background:#8e8e8e"></div>
<div class="a " style="left:256.6px;top:536.5px;width:9px;height:1px;background:#8e8e8e"></div>
<div class="a " style="left:256.6px;top:546.9px;width:9px;height:1px;background:#8e8e8e"></div>
<div class="a " style="left:256.6px;top:552.7px;width:9px;height:1px;background:#8e8e8e"></div>
<div class="a " style="left:256.6px;top:559.8px;width:9px;height:1px;background:#8e8e8e"></div>
<div class="a " style="left:263.7px;top:244.2px;width:2px;height:1px;background:#8e8e8e"></div>
<div class="a " style="left:263.7px;top:261.7px;width:2px;height:1px;background:#8e8e8e"></div>
<div class="a " style="left:263.7px;top:370.8px;width:2px;height:1px;background:#8e8e8e"></div>
<div class="a " style="left:263.7px;top:381.2px;width:2px;height:1px;background:#8e8e8e"></div>
<div class="a " style="left:263.7px;top:403.2px;width:2px;height:1px;background:#8e8e8e"></div>
<div class="a " style="left:263.7px;top:410.9px;width:2px;height:1px;background:#8e8e8e"></div>
<div class="a " style="left:263.7px;top:418.7px;width:2px;height:1px;background:#8e8e8e"></div>
<div class="a " style="left:263.7px;top:442.1px;width:2px;height:1px;background:#8e8e8e"></div>
<div class="a " style="left:263.7px;top:451.4px;width:2px;height:1px;background:#8e8e8e"></div>
<div class="a " style="left:263.7px;top:469.4px;width:2px;height:1px;background:#8e8e8e"></div>
<div class="a " style="left:263.7px;top:478.3px;width:2px;height:1px;background:#8e8e8e"></div>
<div class="a " style="left:263.7px;top:504.3px;width:2px;height:1px;background:#8e8e8e"></div>
<div class="a " style="left:263.7px;top:528.1px;width:2px;height:1px;background:#8e8e8e"></div>
<div class="a " style="left:256.6px;top:323.5px;width:9px;height:1.5px;background:#e6e6e6"></div>
<div class="a " style="left:278.8px;top:224.2px;width:11.6px;height:338.2px;background:#383838"></div>
<div class="a " style="left:279.6px;top:410.3px;width:4.3px;height:151.4px;background:#55dd6b"></div>
<div class="a " style="left:284.9px;top:380px;width:4.6px;height:181.7px;background:#55dd6b"></div>
<div class="a " style="left:291.3px;top:225.1px;width:1.7px;height:0.9px;background:#9a9a9a"></div>
<div class="a t " style="left:294.1px;top:222.2px;font-size:6.4px;color:#c4c4c4">0</div>
<div class="a " style="left:291.3px;top:247.5px;width:1.7px;height:0.9px;background:#9a9a9a"></div>
<div class="a t " style="left:294.1px;top:244.6px;font-size:6.4px;color:#c4c4c4">3</div>
<div class="a " style="left:291.3px;top:271px;width:1.7px;height:0.9px;background:#9a9a9a"></div>
<div class="a t " style="left:294.1px;top:268.1px;font-size:6.4px;color:#c4c4c4">6</div>
<div class="a " style="left:291.3px;top:292.5px;width:1.7px;height:0.9px;background:#9a9a9a"></div>
<div class="a t " style="left:294.1px;top:289.6px;font-size:6.4px;color:#c4c4c4">9</div>
<div class="a " style="left:291.3px;top:315.7px;width:1.7px;height:0.9px;background:#9a9a9a"></div>
<div class="a t " style="left:294.1px;top:312.8px;font-size:6.4px;color:#c4c4c4">12</div>
<div class="a " style="left:291.3px;top:338.1px;width:1.7px;height:0.9px;background:#9a9a9a"></div>
<div class="a t " style="left:294.1px;top:335.2px;font-size:6.4px;color:#c4c4c4">15</div>
<div class="a " style="left:291.3px;top:360.6px;width:1.7px;height:0.9px;background:#9a9a9a"></div>
<div class="a t " style="left:294.1px;top:357.7px;font-size:6.4px;color:#c4c4c4">18</div>
<div class="a " style="left:291.3px;top:383.2px;width:1.7px;height:0.9px;background:#9a9a9a"></div>
<div class="a t " style="left:294.1px;top:380.3px;font-size:6.4px;color:#c4c4c4">21</div>
<div class="a " style="left:291.3px;top:405.5px;width:1.7px;height:0.9px;background:#9a9a9a"></div>
<div class="a t " style="left:294.1px;top:402.6px;font-size:6.4px;color:#c4c4c4">24</div>
<div class="a " style="left:291.3px;top:435.4px;width:1.7px;height:0.9px;background:#9a9a9a"></div>
<div class="a t " style="left:294.1px;top:432.5px;font-size:6.4px;color:#c4c4c4">30</div>
<div class="a " style="left:291.3px;top:459.9px;width:1.7px;height:0.9px;background:#9a9a9a"></div>
<div class="a t " style="left:294.1px;top:457px;font-size:6.4px;color:#c4c4c4">35</div>
<div class="a " style="left:291.3px;top:484.6px;width:1.7px;height:0.9px;background:#9a9a9a"></div>
<div class="a t " style="left:294.1px;top:481.7px;font-size:6.4px;color:#c4c4c4">40</div>
<div class="a " style="left:291.3px;top:511px;width:1.7px;height:0.9px;background:#9a9a9a"></div>
<div class="a t " style="left:294.1px;top:508.1px;font-size:6.4px;color:#c4c4c4">45</div>
<div class="a " style="left:291.3px;top:536.5px;width:1.7px;height:0.9px;background:#9a9a9a"></div>
<div class="a t " style="left:294.1px;top:533.6px;font-size:6.4px;color:#c4c4c4">50</div>
<div class="a " style="left:291.3px;top:561.1px;width:1.7px;height:0.9px;background:#9a9a9a"></div>
<div class="a t " style="left:294.1px;top:558.2px;font-size:6.4px;color:#c4c4c4">60</div>
<div class="a cap" style="left:259px;top:372px;width:15.3px;height:32.2px;"></div>
<div class="a " style="left:245.1px;top:577.5px;width:61.4px;height:38px;background:#24cc8a"></div>
<div class="a t " style="left:245.1px;top:582.6px;width:60.4px;text-align:center;font-size:8.6px;line-height:11.6px;color:#eef6ee">70sLeadSynt<br>31</div>
<div class="a " style="left:305.5px;top:577.5px;width:1px;height:38px;background:rgba(0,0,0,0.25)"></div>
<div class="a " style="left:306.5px;top:93.2px;width:61.4px;height:484.3px;background:#4b4b4b"></div>
<div class="a " style="left:366.9px;top:93.2px;width:1px;height:522.3px;background:#383838"></div>
<div class="a " style="left:312.4px;top:100.1px;width:23.6px;height:23.9px;background:#3d914b;border-radius:3.5px;border:1px solid #3d914b;box-sizing:border-box"></div>
<svg class="a" style="left:312.4px;top:100.1px;" width="23.6" height="23.9" viewBox="0 0 23.6 23.9"><path d="M3.9 14.8 L7.5 14.8 M10.2 13.4 L13 9.9 M15.7 8.5 L19.2 8.5" stroke="#fff" stroke-width="1" fill="none"/><circle cx="9.1" cy="14.7" r="1.65" stroke="#fff" stroke-width="0.95" fill="none"/><circle cx="14.1" cy="8.5" r="1.65" stroke="#fff" stroke-width="0.95" fill="none"/></svg>
<div class="a " style="left:312.4px;top:128.2px;width:48.5px;height:24.4px;background:#434343;border-radius:3.5px;border:1px solid #393939;box-sizing:border-box"></div>
<div class="a " style="left:335.8px;top:128.2px;width:1px;height:24.4px;background:#393939"></div>
<div class="a t " style="left:312.4px;top:135.8px;width:24px;text-align:center;font-size:10px;font-weight:bold;color:#f2f2f2">M</div>
<div class="a t " style="left:336.6px;top:135.8px;width:24px;text-align:center;font-size:10px;font-weight:bold;color:#f2f2f2">S</div>
<svg class="a" style="left:311.9px;top:156.6px;" width="50" height="50" viewBox="0 0 50 50"><path d="M15.63 40.60 A18.2 18.2 0 1 1 34.37 40.60" stroke="#333333" stroke-width="4.4" fill="none"/><circle cx="25" cy="25" r="16" fill="#949494"/><path d="M25 5 L25 9" stroke="#55dd6b" stroke-width="1" /><path d="M25 25 L25.00 9.00" stroke="#3a3a3a" stroke-width="0.9"/></svg>
<div class="a " style="left:337.7px;top:212.3px;width:16.8px;height:8.6px;background:#2f2f2f"></div>
<div class="a " style="left:327.8px;top:225px;width:12.1px;height:337px;background:#4e4e4e"></div>
<div class="a " style="left:326.9px;top:224.5px;width:0.85px;height:337px;background:#383838"></div>
<div class="a " style="left:318px;top:226.5px;width:9px;height:1px;background:#656565"></div>
<div class="a " style="left:318px;top:279.5px;width:9px;height:1px;background:#656565"></div>
<div class="a " style="left:318px;top:361px;width:9px;height:1px;background:#656565"></div>
<div class="a " style="left:318px;top:391.8px;width:9px;height:1px;background:#656565"></div>
<div class="a " style="left:318px;top:427px;width:9px;height:1px;background:#656565"></div>
<div class="a " style="left:318px;top:460.2px;width:9px;height:1px;background:#656565"></div>
<div class="a " style="left:318px;top:484.8px;width:9px;height:1px;background:#656565"></div>
<div class="a " style="left:318px;top:518.1px;width:9px;height:1px;background:#656565"></div>
<div class="a " style="left:318px;top:536.5px;width:9px;height:1px;background:#656565"></div>
<div class="a " style="left:318px;top:546.9px;width:9px;height:1px;background:#656565"></div>
<div class="a " style="left:318px;top:552.7px;width:9px;height:1px;background:#656565"></div>
<div class="a " style="left:318px;top:559.8px;width:9px;height:1px;background:#656565"></div>
<div class="a " style="left:325.1px;top:244.2px;width:2px;height:1px;background:#656565"></div>
<div class="a " style="left:325.1px;top:261.7px;width:2px;height:1px;background:#656565"></div>
<div class="a " style="left:325.1px;top:370.8px;width:2px;height:1px;background:#656565"></div>
<div class="a " style="left:325.1px;top:381.2px;width:2px;height:1px;background:#656565"></div>
<div class="a " style="left:325.1px;top:403.2px;width:2px;height:1px;background:#656565"></div>
<div class="a " style="left:325.1px;top:410.9px;width:2px;height:1px;background:#656565"></div>
<div class="a " style="left:325.1px;top:418.7px;width:2px;height:1px;background:#656565"></div>
<div class="a " style="left:325.1px;top:442.1px;width:2px;height:1px;background:#656565"></div>
<div class="a " style="left:325.1px;top:451.4px;width:2px;height:1px;background:#656565"></div>
<div class="a " style="left:325.1px;top:469.4px;width:2px;height:1px;background:#656565"></div>
<div class="a " style="left:325.1px;top:478.3px;width:2px;height:1px;background:#656565"></div>
<div class="a " style="left:325.1px;top:504.3px;width:2px;height:1px;background:#656565"></div>
<div class="a " style="left:325.1px;top:528.1px;width:2px;height:1px;background:#656565"></div>
<div class="a " style="left:318px;top:323.5px;width:9px;height:1.5px;background:#e6e6e6"></div>
<div class="a " style="left:340.2px;top:224.2px;width:11.6px;height:338.2px;background:#383838"></div>
<div class="a " style="left:352.7px;top:225.1px;width:1.7px;height:0.9px;background:#707070"></div>
<div class="a t " style="left:355.5px;top:222.2px;font-size:6.4px;color:#979797">0</div>
<div class="a " style="left:352.7px;top:247.5px;width:1.7px;height:0.9px;background:#707070"></div>
<div class="a t " style="left:355.5px;top:244.6px;font-size:6.4px;color:#979797">3</div>
<div class="a " style="left:352.7px;top:271px;width:1.7px;height:0.9px;background:#707070"></div>
<div class="a t " style="left:355.5px;top:268.1px;font-size:6.4px;color:#979797">6</div>
<div class="a " style="left:352.7px;top:292.5px;width:1.7px;height:0.9px;background:#707070"></div>
<div class="a t " style="left:355.5px;top:289.6px;font-size:6.4px;color:#979797">9</div>
<div class="a " style="left:352.7px;top:315.7px;width:1.7px;height:0.9px;background:#707070"></div>
<div class="a t " style="left:355.5px;top:312.8px;font-size:6.4px;color:#979797">12</div>
<div class="a " style="left:352.7px;top:338.1px;width:1.7px;height:0.9px;background:#707070"></div>
<div class="a t " style="left:355.5px;top:335.2px;font-size:6.4px;color:#979797">15</div>
<div class="a " style="left:352.7px;top:360.6px;width:1.7px;height:0.9px;background:#707070"></div>
<div class="a t " style="left:355.5px;top:357.7px;font-size:6.4px;color:#979797">18</div>
<div class="a " style="left:352.7px;top:383.2px;width:1.7px;height:0.9px;background:#707070"></div>
<div class="a t " style="left:355.5px;top:380.3px;font-size:6.4px;color:#979797">21</div>
<div class="a " style="left:352.7px;top:405.5px;width:1.7px;height:0.9px;background:#707070"></div>
<div class="a t " style="left:355.5px;top:402.6px;font-size:6.4px;color:#979797">24</div>
<div class="a " style="left:352.7px;top:435.4px;width:1.7px;height:0.9px;background:#707070"></div>
<div class="a t " style="left:355.5px;top:432.5px;font-size:6.4px;color:#979797">30</div>
<div class="a " style="left:352.7px;top:459.9px;width:1.7px;height:0.9px;background:#707070"></div>
<div class="a t " style="left:355.5px;top:457px;font-size:6.4px;color:#979797">35</div>
<div class="a " style="left:352.7px;top:484.6px;width:1.7px;height:0.9px;background:#707070"></div>
<div class="a t " style="left:355.5px;top:481.7px;font-size:6.4px;color:#979797">40</div>
<div class="a " style="left:352.7px;top:511px;width:1.7px;height:0.9px;background:#707070"></div>
<div class="a t " style="left:355.5px;top:508.1px;font-size:6.4px;color:#979797">45</div>
<div class="a " style="left:352.7px;top:536.5px;width:1.7px;height:0.9px;background:#707070"></div>
<div class="a t " style="left:355.5px;top:533.6px;font-size:6.4px;color:#979797">50</div>
<div class="a " style="left:352.7px;top:561.1px;width:1.7px;height:0.9px;background:#707070"></div>
<div class="a t " style="left:355.5px;top:558.2px;font-size:6.4px;color:#979797">60</div>
<div class="a cap" style="left:320.4px;top:308px;width:15.3px;height:32.2px;"></div>
<div class="a " style="left:306.5px;top:577.5px;width:61.4px;height:38px;background:#24a33d"></div>
<div class="a t " style="left:306.5px;top:582.6px;width:60.4px;text-align:center;font-size:8.6px;line-height:11.6px;color:#eef6ee">LaRo/LargCh</div>
<div class="a " style="left:366.9px;top:577.5px;width:1px;height:38px;background:rgba(0,0,0,0.25)"></div>
<div class="a " style="left:367.9px;top:93.2px;width:61.4px;height:484.3px;background:#4b4b4b"></div>
<div class="a " style="left:428.3px;top:93.2px;width:1px;height:522.3px;background:#383838"></div>
<div class="a " style="left:373.8px;top:100.1px;width:23.6px;height:23.9px;background:#3d914b;border-radius:3.5px;border:1px solid #3d914b;box-sizing:border-box"></div>
<svg class="a" style="left:373.8px;top:100.1px;" width="23.6" height="23.9" viewBox="0 0 23.6 23.9"><path d="M3.9 14.8 L7.5 14.8 M10.2 13.4 L13 9.9 M15.7 8.5 L19.2 8.5" stroke="#fff" stroke-width="1" fill="none"/><circle cx="9.1" cy="14.7" r="1.65" stroke="#fff" stroke-width="0.95" fill="none"/><circle cx="14.1" cy="8.5" r="1.65" stroke="#fff" stroke-width="0.95" fill="none"/></svg>
<div class="a " style="left:373.8px;top:128.2px;width:48.5px;height:24.4px;background:#434343;border-radius:3.5px;border:1px solid #393939;box-sizing:border-box"></div>
<div class="a " style="left:397.2px;top:128.2px;width:1px;height:24.4px;background:#393939"></div>
<div class="a t " style="left:373.8px;top:135.8px;width:24px;text-align:center;font-size:10px;font-weight:bold;color:#f2f2f2">M</div>
<div class="a t " style="left:398px;top:135.8px;width:24px;text-align:center;font-size:10px;font-weight:bold;color:#f2f2f2">S</div>
<svg class="a" style="left:373.3px;top:156.6px;" width="50" height="50" viewBox="0 0 50 50"><path d="M15.63 40.60 A18.2 18.2 0 1 1 34.37 40.60" stroke="#333333" stroke-width="4.4" fill="none"/><circle cx="25" cy="25" r="16" fill="#949494"/><path d="M25 5 L25 9" stroke="#55dd6b" stroke-width="1" /><path d="M25 25 L25.00 9.00" stroke="#3a3a3a" stroke-width="0.9"/></svg>
<div class="a " style="left:399.1px;top:212.3px;width:16.8px;height:8.6px;background:#2f2f2f"></div>
<div class="a t " style="left:399.1px;top:213.2px;width:16.8px;text-align:center;font-size:6.5px;font-weight:bold;line-height:8.8px;color:#3fb84c">-41</div>
<div class="a " style="left:389.2px;top:225px;width:12.1px;height:337px;background:#4e4e4e"></div>
<div class="a " style="left:388.3px;top:224.5px;width:0.85px;height:337px;background:#383838"></div>
<div class="a " style="left:379.4px;top:226.5px;width:9px;height:1px;background:#656565"></div>
<div class="a " style="left:379.4px;top:279.5px;width:9px;height:1px;background:#656565"></div>
<div class="a " style="left:379.4px;top:361px;width:9px;height:1px;background:#656565"></div>
<div class="a " style="left:379.4px;top:391.8px;width:9px;height:1px;background:#656565"></div>
<div class="a " style="left:379.4px;top:427px;width:9px;height:1px;background:#656565"></div>
<div class="a " style="left:379.4px;top:460.2px;width:9px;height:1px;background:#656565"></div>
<div class="a " style="left:379.4px;top:484.8px;width:9px;height:1px;background:#656565"></div>
<div class="a " style="left:379.4px;top:518.1px;width:9px;height:1px;background:#656565"></div>
<div class="a " style="left:379.4px;top:536.5px;width:9px;height:1px;background:#656565"></div>
<div class="a " style="left:379.4px;top:546.9px;width:9px;height:1px;background:#656565"></div>
<div class="a " style="left:379.4px;top:552.7px;width:9px;height:1px;background:#656565"></div>
<div class="a " style="left:379.4px;top:559.8px;width:9px;height:1px;background:#656565"></div>
<div class="a " style="left:386.5px;top:244.2px;width:2px;height:1px;background:#656565"></div>
<div class="a " style="left:386.5px;top:261.7px;width:2px;height:1px;background:#656565"></div>
<div class="a " style="left:386.5px;top:370.8px;width:2px;height:1px;background:#656565"></div>
<div class="a " style="left:386.5px;top:381.2px;width:2px;height:1px;background:#656565"></div>
<div class="a " style="left:386.5px;top:403.2px;width:2px;height:1px;background:#656565"></div>
<div class="a " style="left:386.5px;top:410.9px;width:2px;height:1px;background:#656565"></div>
<div class="a " style="left:386.5px;top:418.7px;width:2px;height:1px;background:#656565"></div>
<div class="a " style="left:386.5px;top:442.1px;width:2px;height:1px;background:#656565"></div>
<div class="a " style="left:386.5px;top:451.4px;width:2px;height:1px;background:#656565"></div>
<div class="a " style="left:386.5px;top:469.4px;width:2px;height:1px;background:#656565"></div>
<div class="a " style="left:386.5px;top:478.3px;width:2px;height:1px;background:#656565"></div>
<div class="a " style="left:386.5px;top:504.3px;width:2px;height:1px;background:#656565"></div>
<div class="a " style="left:386.5px;top:528.1px;width:2px;height:1px;background:#656565"></div>
<div class="a " style="left:379.4px;top:323.5px;width:9px;height:1.5px;background:#e6e6e6"></div>
<div class="a " style="left:401.6px;top:224.2px;width:11.6px;height:338.2px;background:#383838"></div>
<div class="a " style="left:402.4px;top:559.3px;width:4.3px;height:2.4px;background:#55dd6b"></div>
<div class="a " style="left:407.7px;top:559.3px;width:4.6px;height:2.4px;background:#55dd6b"></div>
<div class="a " style="left:414.1px;top:225.1px;width:1.7px;height:0.9px;background:#707070"></div>
<div class="a t " style="left:416.9px;top:222.2px;font-size:6.4px;color:#979797">0</div>
<div class="a " style="left:414.1px;top:247.5px;width:1.7px;height:0.9px;background:#707070"></div>
<div class="a t " style="left:416.9px;top:244.6px;font-size:6.4px;color:#979797">3</div>
<div class="a " style="left:414.1px;top:271px;width:1.7px;height:0.9px;background:#707070"></div>
<div class="a t " style="left:416.9px;top:268.1px;font-size:6.4px;color:#979797">6</div>
<div class="a " style="left:414.1px;top:292.5px;width:1.7px;height:0.9px;background:#707070"></div>
<div class="a t " style="left:416.9px;top:289.6px;font-size:6.4px;color:#979797">9</div>
<div class="a " style="left:414.1px;top:315.7px;width:1.7px;height:0.9px;background:#707070"></div>
<div class="a t " style="left:416.9px;top:312.8px;font-size:6.4px;color:#979797">12</div>
<div class="a " style="left:414.1px;top:338.1px;width:1.7px;height:0.9px;background:#707070"></div>
<div class="a t " style="left:416.9px;top:335.2px;font-size:6.4px;color:#979797">15</div>
<div class="a " style="left:414.1px;top:360.6px;width:1.7px;height:0.9px;background:#707070"></div>
<div class="a t " style="left:416.9px;top:357.7px;font-size:6.4px;color:#979797">18</div>
<div class="a " style="left:414.1px;top:383.2px;width:1.7px;height:0.9px;background:#707070"></div>
<div class="a t " style="left:416.9px;top:380.3px;font-size:6.4px;color:#979797">21</div>
<div class="a " style="left:414.1px;top:405.5px;width:1.7px;height:0.9px;background:#707070"></div>
<div class="a t " style="left:416.9px;top:402.6px;font-size:6.4px;color:#979797">24</div>
<div class="a " style="left:414.1px;top:435.4px;width:1.7px;height:0.9px;background:#707070"></div>
<div class="a t " style="left:416.9px;top:432.5px;font-size:6.4px;color:#979797">30</div>
<div class="a " style="left:414.1px;top:459.9px;width:1.7px;height:0.9px;background:#707070"></div>
<div class="a t " style="left:416.9px;top:457px;font-size:6.4px;color:#979797">35</div>
<div class="a " style="left:414.1px;top:484.6px;width:1.7px;height:0.9px;background:#707070"></div>
<div class="a t " style="left:416.9px;top:481.7px;font-size:6.4px;color:#979797">40</div>
<div class="a " style="left:414.1px;top:511px;width:1.7px;height:0.9px;background:#707070"></div>
<div class="a t " style="left:416.9px;top:508.1px;font-size:6.4px;color:#979797">45</div>
<div class="a " style="left:414.1px;top:536.5px;width:1.7px;height:0.9px;background:#707070"></div>
<div class="a t " style="left:416.9px;top:533.6px;font-size:6.4px;color:#979797">50</div>
<div class="a " style="left:414.1px;top:561.1px;width:1.7px;height:0.9px;background:#707070"></div>
<div class="a t " style="left:416.9px;top:558.2px;font-size:6.4px;color:#979797">60</div>
<div class="a cap" style="left:381.8px;top:308px;width:15.3px;height:32.2px;"></div>
<div class="a " style="left:367.9px;top:577.5px;width:61.4px;height:38px;background:#24a33d"></div>
<div class="a t " style="left:367.9px;top:582.6px;width:60.4px;text-align:center;font-size:8.6px;line-height:11.6px;color:#eef6ee">LaHa/Concrt</div>
<div class="a " style="left:428.3px;top:577.5px;width:1px;height:38px;background:rgba(0,0,0,0.25)"></div>
<div class="a " style="left:429.3px;top:93.2px;width:61.4px;height:484.3px;background:#4b4b4b"></div>
<div class="a " style="left:489.7px;top:93.2px;width:1px;height:522.3px;background:#383838"></div>
<div class="a " style="left:435.2px;top:100.1px;width:23.6px;height:23.9px;background:#434343;border-radius:3.5px;border:1px solid #393939;box-sizing:border-box"></div>
<svg class="a" style="left:435.2px;top:100.1px;" width="23.6" height="23.9" viewBox="0 0 23.6 23.9"><path d="M3.9 14.8 L7.5 14.8 M10.2 13.4 L13 9.9 M15.7 8.5 L19.2 8.5" stroke="#fff" stroke-width="1" fill="none"/><circle cx="9.1" cy="14.7" r="1.65" stroke="#fff" stroke-width="0.95" fill="none"/><circle cx="14.1" cy="8.5" r="1.65" stroke="#fff" stroke-width="0.95" fill="none"/></svg>
<div class="a " style="left:435.2px;top:128.2px;width:48.5px;height:24.4px;background:#434343;border-radius:3.5px;border:1px solid #393939;box-sizing:border-box"></div>
<div class="a " style="left:458.6px;top:128.2px;width:1px;height:24.4px;background:#393939"></div>
<div class="a t " style="left:435.2px;top:135.8px;width:24px;text-align:center;font-size:10px;font-weight:bold;color:#f2f2f2">M</div>
<div class="a t " style="left:459.4px;top:135.8px;width:24px;text-align:center;font-size:10px;font-weight:bold;color:#f2f2f2">S</div>
<svg class="a" style="left:434.7px;top:156.6px;" width="50" height="50" viewBox="0 0 50 50"><path d="M15.63 40.60 A18.2 18.2 0 1 1 34.37 40.60" stroke="#333333" stroke-width="4.4" fill="none"/><circle cx="25" cy="25" r="16" fill="#949494"/><path d="M25 5 L25 9" stroke="#55dd6b" stroke-width="1" /><path d="M25 25 L25.00 9.00" stroke="#3a3a3a" stroke-width="0.9"/></svg>
<div class="a " style="left:460.5px;top:212.3px;width:16.8px;height:8.6px;background:#2f2f2f"></div>
<div class="a t " style="left:460.5px;top:213.2px;width:16.8px;text-align:center;font-size:6.5px;font-weight:bold;line-height:8.8px;color:#3fb84c">-33</div>
<div class="a " style="left:450.6px;top:225px;width:12.1px;height:337px;background:#4e4e4e"></div>
<div class="a " style="left:449.7px;top:224.5px;width:0.85px;height:337px;background:#383838"></div>
<div class="a " style="left:440.8px;top:226.5px;width:9px;height:1px;background:#656565"></div>
<div class="a " style="left:440.8px;top:279.5px;width:9px;height:1px;background:#656565"></div>
<div class="a " style="left:440.8px;top:361px;width:9px;height:1px;background:#656565"></div>
<div class="a " style="left:440.8px;top:391.8px;width:9px;height:1px;background:#656565"></div>
<div class="a " style="left:440.8px;top:427px;width:9px;height:1px;background:#656565"></div>
<div class="a " style="left:440.8px;top:460.2px;width:9px;height:1px;background:#656565"></div>
<div class="a " style="left:440.8px;top:484.8px;width:9px;height:1px;background:#656565"></div>
<div class="a " style="left:440.8px;top:518.1px;width:9px;height:1px;background:#656565"></div>
<div class="a " style="left:440.8px;top:536.5px;width:9px;height:1px;background:#656565"></div>
<div class="a " style="left:440.8px;top:546.9px;width:9px;height:1px;background:#656565"></div>
<div class="a " style="left:440.8px;top:552.7px;width:9px;height:1px;background:#656565"></div>
<div class="a " style="left:440.8px;top:559.8px;width:9px;height:1px;background:#656565"></div>
<div class="a " style="left:447.9px;top:244.2px;width:2px;height:1px;background:#656565"></div>
<div class="a " style="left:447.9px;top:261.7px;width:2px;height:1px;background:#656565"></div>
<div class="a " style="left:447.9px;top:370.8px;width:2px;height:1px;background:#656565"></div>
<div class="a " style="left:447.9px;top:381.2px;width:2px;height:1px;background:#656565"></div>
<div class="a " style="left:447.9px;top:403.2px;width:2px;height:1px;background:#656565"></div>
<div class="a " style="left:447.9px;top:410.9px;width:2px;height:1px;background:#656565"></div>
<div class="a " style="left:447.9px;top:418.7px;width:2px;height:1px;background:#656565"></div>
<div class="a " style="left:447.9px;top:442.1px;width:2px;height:1px;background:#656565"></div>
<div class="a " style="left:447.9px;top:451.4px;width:2px;height:1px;background:#656565"></div>
<div class="a " style="left:447.9px;top:469.4px;width:2px;height:1px;background:#656565"></div>
<div class="a " style="left:447.9px;top:478.3px;width:2px;height:1px;background:#656565"></div>
<div class="a " style="left:447.9px;top:504.3px;width:2px;height:1px;background:#656565"></div>
<div class="a " style="left:447.9px;top:528.1px;width:2px;height:1px;background:#656565"></div>
<div class="a " style="left:440.8px;top:323.5px;width:9px;height:1.5px;background:#e6e6e6"></div>
<div class="a " style="left:463px;top:224.2px;width:11.6px;height:338.2px;background:#383838"></div>
<div class="a " style="left:463.8px;top:473.7px;width:4.3px;height:88px;background:#55dd6b"></div>
<div class="a " style="left:463.8px;top:452.8px;width:4.3px;height:1.8px;background:#4cc25a"></div>
<div class="a " style="left:469.1px;top:472.6px;width:4.6px;height:89.1px;background:#55dd6b"></div>
<div class="a " style="left:469.1px;top:447.1px;width:4.6px;height:1.8px;background:#4cc25a"></div>
<div class="a " style="left:475.5px;top:225.1px;width:1.7px;height:0.9px;background:#707070"></div>
<div class="a t " style="left:478.3px;top:222.2px;font-size:6.4px;color:#979797">0</div>
<div class="a " style="left:475.5px;top:247.5px;width:1.7px;height:0.9px;background:#707070"></div>
<div class="a t " style="left:478.3px;top:244.6px;font-size:6.4px;color:#979797">3</div>
<div class="a " style="left:475.5px;top:271px;width:1.7px;height:0.9px;background:#707070"></div>
<div class="a t " style="left:478.3px;top:268.1px;font-size:6.4px;color:#979797">6</div>
<div class="a " style="left:475.5px;top:292.5px;width:1.7px;height:0.9px;background:#707070"></div>
<div class="a t " style="left:478.3px;top:289.6px;font-size:6.4px;color:#979797">9</div>
<div class="a " style="left:475.5px;top:315.7px;width:1.7px;height:0.9px;background:#707070"></div>
<div class="a t " style="left:478.3px;top:312.8px;font-size:6.4px;color:#979797">12</div>
<div class="a " style="left:475.5px;top:338.1px;width:1.7px;height:0.9px;background:#707070"></div>
<div class="a t " style="left:478.3px;top:335.2px;font-size:6.4px;color:#979797">15</div>
<div class="a " style="left:475.5px;top:360.6px;width:1.7px;height:0.9px;background:#707070"></div>
<div class="a t " style="left:478.3px;top:357.7px;font-size:6.4px;color:#979797">18</div>
<div class="a " style="left:475.5px;top:383.2px;width:1.7px;height:0.9px;background:#707070"></div>
<div class="a t " style="left:478.3px;top:380.3px;font-size:6.4px;color:#979797">21</div>
<div class="a " style="left:475.5px;top:405.5px;width:1.7px;height:0.9px;background:#707070"></div>
<div class="a t " style="left:478.3px;top:402.6px;font-size:6.4px;color:#979797">24</div>
<div class="a " style="left:475.5px;top:435.4px;width:1.7px;height:0.9px;background:#707070"></div>
<div class="a t " style="left:478.3px;top:432.5px;font-size:6.4px;color:#979797">30</div>
<div class="a " style="left:475.5px;top:459.9px;width:1.7px;height:0.9px;background:#707070"></div>
<div class="a t " style="left:478.3px;top:457px;font-size:6.4px;color:#979797">35</div>
<div class="a " style="left:475.5px;top:484.6px;width:1.7px;height:0.9px;background:#707070"></div>
<div class="a t " style="left:478.3px;top:481.7px;font-size:6.4px;color:#979797">40</div>
<div class="a " style="left:475.5px;top:511px;width:1.7px;height:0.9px;background:#707070"></div>
<div class="a t " style="left:478.3px;top:508.1px;font-size:6.4px;color:#979797">45</div>
<div class="a " style="left:475.5px;top:536.5px;width:1.7px;height:0.9px;background:#707070"></div>
<div class="a t " style="left:478.3px;top:533.6px;font-size:6.4px;color:#979797">50</div>
<div class="a " style="left:475.5px;top:561.1px;width:1.7px;height:0.9px;background:#707070"></div>
<div class="a t " style="left:478.3px;top:558.2px;font-size:6.4px;color:#979797">60</div>
<div class="a cap" style="left:443.2px;top:308px;width:15.3px;height:32.2px;"></div>
<div class="a " style="left:429.3px;top:577.5px;width:61.4px;height:38px;background:#24a33d"></div>
<div class="a t " style="left:429.3px;top:582.6px;width:60.4px;text-align:center;font-size:8.6px;line-height:11.6px;color:#eef6ee">SmPl/1.3sNi</div>
<div class="a " style="left:489.7px;top:577.5px;width:1px;height:38px;background:rgba(0,0,0,0.25)"></div>
<div class="a " style="left:490.7px;top:93.2px;width:61.4px;height:484.3px;background:#4b4b4b"></div>
<div class="a " style="left:551.1px;top:93.2px;width:1px;height:522.3px;background:#383838"></div>
<div class="a " style="left:496.6px;top:100.1px;width:23.6px;height:23.9px;background:#434343;border-radius:3.5px;border:1px solid #393939;box-sizing:border-box"></div>
<svg class="a" style="left:496.6px;top:100.1px;" width="23.6" height="23.9" viewBox="0 0 23.6 23.9"><path d="M3.9 14.8 L7.5 14.8 M10.2 13.4 L13 9.9 M15.7 8.5 L19.2 8.5" stroke="#fff" stroke-width="1" fill="none"/><circle cx="9.1" cy="14.7" r="1.65" stroke="#fff" stroke-width="0.95" fill="none"/><circle cx="14.1" cy="8.5" r="1.65" stroke="#fff" stroke-width="0.95" fill="none"/></svg>
<div class="a " style="left:496.6px;top:128.2px;width:48.5px;height:24.4px;background:#434343;border-radius:3.5px;border:1px solid #393939;box-sizing:border-box"></div>
<div class="a " style="left:520px;top:128.2px;width:1px;height:24.4px;background:#393939"></div>
<div class="a t " style="left:496.6px;top:135.8px;width:24px;text-align:center;font-size:10px;font-weight:bold;color:#f2f2f2">M</div>
<div class="a t " style="left:520.8px;top:135.8px;width:24px;text-align:center;font-size:10px;font-weight:bold;color:#f2f2f2">S</div>
<svg class="a" style="left:496.1px;top:156.6px;" width="50" height="50" viewBox="0 0 50 50"><path d="M15.63 40.60 A18.2 18.2 0 1 1 34.37 40.60" stroke="#333333" stroke-width="4.4" fill="none"/><circle cx="25" cy="25" r="16" fill="#949494"/><path d="M25 5 L25 9" stroke="#55dd6b" stroke-width="1" /><path d="M25 25 L25.00 9.00" stroke="#3a3a3a" stroke-width="0.9"/></svg>
<div class="a " style="left:521.9px;top:212.3px;width:16.8px;height:8.6px;background:#2f2f2f"></div>
<div class="a t " style="left:521.9px;top:213.2px;width:16.8px;text-align:center;font-size:6.5px;font-weight:bold;line-height:8.8px;color:#3fb84c">-47</div>
<div class="a " style="left:512px;top:225px;width:12.1px;height:337px;background:#4e4e4e"></div>
<div class="a " style="left:511.1px;top:224.5px;width:0.85px;height:337px;background:#383838"></div>
<div class="a " style="left:502.2px;top:226.5px;width:9px;height:1px;background:#656565"></div>
<div class="a " style="left:502.2px;top:279.5px;width:9px;height:1px;background:#656565"></div>
<div class="a " style="left:502.2px;top:361px;width:9px;height:1px;background:#656565"></div>
<div class="a " style="left:502.2px;top:391.8px;width:9px;height:1px;background:#656565"></div>
<div class="a " style="left:502.2px;top:427px;width:9px;height:1px;background:#656565"></div>
<div class="a " style="left:502.2px;top:460.2px;width:9px;height:1px;background:#656565"></div>
<div class="a " style="left:502.2px;top:484.8px;width:9px;height:1px;background:#656565"></div>
<div class="a " style="left:502.2px;top:518.1px;width:9px;height:1px;background:#656565"></div>
<div class="a " style="left:502.2px;top:536.5px;width:9px;height:1px;background:#656565"></div>
<div class="a " style="left:502.2px;top:546.9px;width:9px;height:1px;background:#656565"></div>
<div class="a " style="left:502.2px;top:552.7px;width:9px;height:1px;background:#656565"></div>
<div class="a " style="left:502.2px;top:559.8px;width:9px;height:1px;background:#656565"></div>
<div class="a " style="left:509.3px;top:244.2px;width:2px;height:1px;background:#656565"></div>
<div class="a " style="left:509.3px;top:261.7px;width:2px;height:1px;background:#656565"></div>
<div class="a " style="left:509.3px;top:370.8px;width:2px;height:1px;background:#656565"></div>
<div class="a " style="left:509.3px;top:381.2px;width:2px;height:1px;background:#656565"></div>
<div class="a " style="left:509.3px;top:403.2px;width:2px;height:1px;background:#656565"></div>
<div class="a " style="left:509.3px;top:410.9px;width:2px;height:1px;background:#656565"></div>
<div class="a " style="left:509.3px;top:418.7px;width:2px;height:1px;background:#656565"></div>
<div class="a " style="left:509.3px;top:442.1px;width:2px;height:1px;background:#656565"></div>
<div class="a " style="left:509.3px;top:451.4px;width:2px;height:1px;background:#656565"></div>
<div class="a " style="left:509.3px;top:469.4px;width:2px;height:1px;background:#656565"></div>
<div class="a " style="left:509.3px;top:478.3px;width:2px;height:1px;background:#656565"></div>
<div class="a " style="left:509.3px;top:504.3px;width:2px;height:1px;background:#656565"></div>
<div class="a " style="left:509.3px;top:528.1px;width:2px;height:1px;background:#656565"></div>
<div class="a " style="left:502.2px;top:323.5px;width:9px;height:1.5px;background:#e6e6e6"></div>
<div class="a " style="left:524.4px;top:224.2px;width:11.6px;height:338.2px;background:#383838"></div>
<div class="a " style="left:525.2px;top:559.3px;width:4.3px;height:2.4px;background:#55dd6b"></div>
<div class="a " style="left:530.5px;top:559.3px;width:4.6px;height:2.4px;background:#55dd6b"></div>
<div class="a " style="left:536.9px;top:225.1px;width:1.7px;height:0.9px;background:#707070"></div>
<div class="a t " style="left:539.7px;top:222.2px;font-size:6.4px;color:#979797">0</div>
<div class="a " style="left:536.9px;top:247.5px;width:1.7px;height:0.9px;background:#707070"></div>
<div class="a t " style="left:539.7px;top:244.6px;font-size:6.4px;color:#979797">3</div>
<div class="a " style="left:536.9px;top:271px;width:1.7px;height:0.9px;background:#707070"></div>
<div class="a t " style="left:539.7px;top:268.1px;font-size:6.4px;color:#979797">6</div>
<div class="a " style="left:536.9px;top:292.5px;width:1.7px;height:0.9px;background:#707070"></div>
<div class="a t " style="left:539.7px;top:289.6px;font-size:6.4px;color:#979797">9</div>
<div class="a " style="left:536.9px;top:315.7px;width:1.7px;height:0.9px;background:#707070"></div>
<div class="a t " style="left:539.7px;top:312.8px;font-size:6.4px;color:#979797">12</div>
<div class="a " style="left:536.9px;top:338.1px;width:1.7px;height:0.9px;background:#707070"></div>
<div class="a t " style="left:539.7px;top:335.2px;font-size:6.4px;color:#979797">15</div>
<div class="a " style="left:536.9px;top:360.6px;width:1.7px;height:0.9px;background:#707070"></div>
<div class="a t " style="left:539.7px;top:357.7px;font-size:6.4px;color:#979797">18</div>
<div class="a " style="left:536.9px;top:383.2px;width:1.7px;height:0.9px;background:#707070"></div>
<div class="a t " style="left:539.7px;top:380.3px;font-size:6.4px;color:#979797">21</div>
<div class="a " style="left:536.9px;top:405.5px;width:1.7px;height:0.9px;background:#707070"></div>
<div class="a t " style="left:539.7px;top:402.6px;font-size:6.4px;color:#979797">24</div>
<div class="a " style="left:536.9px;top:435.4px;width:1.7px;height:0.9px;background:#707070"></div>
<div class="a t " style="left:539.7px;top:432.5px;font-size:6.4px;color:#979797">30</div>
<div class="a " style="left:536.9px;top:459.9px;width:1.7px;height:0.9px;background:#707070"></div>
<div class="a t " style="left:539.7px;top:457px;font-size:6.4px;color:#979797">35</div>
<div class="a " style="left:536.9px;top:484.6px;width:1.7px;height:0.9px;background:#707070"></div>
<div class="a t " style="left:539.7px;top:481.7px;font-size:6.4px;color:#979797">40</div>
<div class="a " style="left:536.9px;top:511px;width:1.7px;height:0.9px;background:#707070"></div>
<div class="a t " style="left:539.7px;top:508.1px;font-size:6.4px;color:#979797">45</div>
<div class="a " style="left:536.9px;top:536.5px;width:1.7px;height:0.9px;background:#707070"></div>
<div class="a t " style="left:539.7px;top:533.6px;font-size:6.4px;color:#979797">50</div>
<div class="a " style="left:536.9px;top:561.1px;width:1.7px;height:0.9px;background:#707070"></div>
<div class="a t " style="left:539.7px;top:558.2px;font-size:6.4px;color:#979797">60</div>
<div class="a cap" style="left:504.6px;top:308px;width:15.3px;height:32.2px;"></div>
<div class="a " style="left:490.7px;top:577.5px;width:61.4px;height:38px;background:#24a33d"></div>
<div class="a t " style="left:490.7px;top:582.6px;width:60.4px;text-align:center;font-size:8.6px;line-height:11.6px;color:#eef6ee">SmRo/1.0sVi</div>
<div class="a " style="left:551.1px;top:577.5px;width:1px;height:38px;background:rgba(0,0,0,0.25)"></div>
<div class="a " style="left:552.1px;top:93.2px;width:61.4px;height:484.3px;background:#4b4b4b"></div>
<div class="a " style="left:612.5px;top:93.2px;width:1px;height:522.3px;background:#383838"></div>
<div class="a " style="left:558px;top:100.1px;width:23.6px;height:23.9px;background:#3d914b;border-radius:3.5px;border:1px solid #3d914b;box-sizing:border-box"></div>
<svg class="a" style="left:558px;top:100.1px;" width="23.6" height="23.9" viewBox="0 0 23.6 23.9"><path d="M3.9 14.8 L7.5 14.8 M10.2 13.4 L13 9.9 M15.7 8.5 L19.2 8.5" stroke="#fff" stroke-width="1" fill="none"/><circle cx="9.1" cy="14.7" r="1.65" stroke="#fff" stroke-width="0.95" fill="none"/><circle cx="14.1" cy="8.5" r="1.65" stroke="#fff" stroke-width="0.95" fill="none"/></svg>
<div class="a " style="left:558px;top:128.2px;width:48.5px;height:24.4px;background:#434343;border-radius:3.5px;border:1px solid #393939;box-sizing:border-box"></div>
<div class="a " style="left:581.4px;top:128.2px;width:1px;height:24.4px;background:#393939"></div>
<div class="a t " style="left:558px;top:135.8px;width:24px;text-align:center;font-size:10px;font-weight:bold;color:#f2f2f2">M</div>
<div class="a t " style="left:582.2px;top:135.8px;width:24px;text-align:center;font-size:10px;font-weight:bold;color:#f2f2f2">S</div>
<svg class="a" style="left:557.5px;top:156.6px;" width="50" height="50" viewBox="0 0 50 50"><path d="M15.63 40.60 A18.2 18.2 0 1 1 34.37 40.60" stroke="#333333" stroke-width="4.4" fill="none"/><circle cx="25" cy="25" r="16" fill="#949494"/><path d="M25 5 L25 9" stroke="#55dd6b" stroke-width="1" /><path d="M25 25 L25.00 9.00" stroke="#3a3a3a" stroke-width="0.9"/></svg>
<div class="a " style="left:583.3px;top:212.3px;width:16.8px;height:8.6px;background:#2f2f2f"></div>
<div class="a t " style="left:583.3px;top:213.2px;width:16.8px;text-align:center;font-size:6.5px;font-weight:bold;line-height:8.8px;color:#3fb84c">-9.0</div>
<div class="a " style="left:573.4px;top:225px;width:12.1px;height:337px;background:#4e4e4e"></div>
<div class="a " style="left:572.5px;top:224.5px;width:0.85px;height:337px;background:#383838"></div>
<div class="a " style="left:563.6px;top:226.5px;width:9px;height:1px;background:#656565"></div>
<div class="a " style="left:563.6px;top:279.5px;width:9px;height:1px;background:#656565"></div>
<div class="a " style="left:563.6px;top:361px;width:9px;height:1px;background:#656565"></div>
<div class="a " style="left:563.6px;top:391.8px;width:9px;height:1px;background:#656565"></div>
<div class="a " style="left:563.6px;top:427px;width:9px;height:1px;background:#656565"></div>
<div class="a " style="left:563.6px;top:460.2px;width:9px;height:1px;background:#656565"></div>
<div class="a " style="left:563.6px;top:484.8px;width:9px;height:1px;background:#656565"></div>
<div class="a " style="left:563.6px;top:518.1px;width:9px;height:1px;background:#656565"></div>
<div class="a " style="left:563.6px;top:536.5px;width:9px;height:1px;background:#656565"></div>
<div class="a " style="left:563.6px;top:546.9px;width:9px;height:1px;background:#656565"></div>
<div class="a " style="left:563.6px;top:552.7px;width:9px;height:1px;background:#656565"></div>
<div class="a " style="left:563.6px;top:559.8px;width:9px;height:1px;background:#656565"></div>
<div class="a " style="left:570.7px;top:244.2px;width:2px;height:1px;background:#656565"></div>
<div class="a " style="left:570.7px;top:261.7px;width:2px;height:1px;background:#656565"></div>
<div class="a " style="left:570.7px;top:370.8px;width:2px;height:1px;background:#656565"></div>
<div class="a " style="left:570.7px;top:381.2px;width:2px;height:1px;background:#656565"></div>
<div class="a " style="left:570.7px;top:403.2px;width:2px;height:1px;background:#656565"></div>
<div class="a " style="left:570.7px;top:410.9px;width:2px;height:1px;background:#656565"></div>
<div class="a " style="left:570.7px;top:418.7px;width:2px;height:1px;background:#656565"></div>
<div class="a " style="left:570.7px;top:442.1px;width:2px;height:1px;background:#656565"></div>
<div class="a " style="left:570.7px;top:451.4px;width:2px;height:1px;background:#656565"></div>
<div class="a " style="left:570.7px;top:469.4px;width:2px;height:1px;background:#656565"></div>
<div class="a " style="left:570.7px;top:478.3px;width:2px;height:1px;background:#656565"></div>
<div class="a " style="left:570.7px;top:504.3px;width:2px;height:1px;background:#656565"></div>
<div class="a " style="left:570.7px;top:528.1px;width:2px;height:1px;background:#656565"></div>
<div class="a " style="left:563.6px;top:323.5px;width:9px;height:1.5px;background:#e6e6e6"></div>
<div class="a " style="left:585.8px;top:224.2px;width:11.6px;height:338.2px;background:#383838"></div>
<div class="a " style="left:586.6px;top:325.6px;width:4.3px;height:236.1px;background:#55dd6b"></div>
<div class="a " style="left:586.6px;top:293.1px;width:4.3px;height:1.8px;background:#b4b13c"></div>
<div class="a " style="left:591.9px;top:319px;width:4.6px;height:242.7px;background:#55dd6b"></div>
<div class="a " style="left:591.9px;top:292.1px;width:4.6px;height:1.8px;background:#b4b13c"></div>
<div class="a " style="left:598.3px;top:225.1px;width:1.7px;height:0.9px;background:#707070"></div>
<div class="a t " style="left:601.1px;top:222.2px;font-size:6.4px;color:#979797">0</div>
<div class="a " style="left:598.3px;top:247.5px;width:1.7px;height:0.9px;background:#707070"></div>
<div class="a t " style="left:601.1px;top:244.6px;font-size:6.4px;color:#979797">3</div>
<div class="a " style="left:598.3px;top:271px;width:1.7px;height:0.9px;background:#707070"></div>
<div class="a t " style="left:601.1px;top:268.1px;font-size:6.4px;color:#979797">6</div>
<div class="a " style="left:598.3px;top:292.5px;width:1.7px;height:0.9px;background:#707070"></div>
<div class="a t " style="left:601.1px;top:289.6px;font-size:6.4px;color:#979797">9</div>
<div class="a " style="left:598.3px;top:315.7px;width:1.7px;height:0.9px;background:#707070"></div>
<div class="a t " style="left:601.1px;top:312.8px;font-size:6.4px;color:#979797">12</div>
<div class="a " style="left:598.3px;top:338.1px;width:1.7px;height:0.9px;background:#707070"></div>
<div class="a t " style="left:601.1px;top:335.2px;font-size:6.4px;color:#979797">15</div>
<div class="a " style="left:598.3px;top:360.6px;width:1.7px;height:0.9px;background:#707070"></div>
<div class="a t " style="left:601.1px;top:357.7px;font-size:6.4px;color:#979797">18</div>
<div class="a " style="left:598.3px;top:383.2px;width:1.7px;height:0.9px;background:#707070"></div>
<div class="a t " style="left:601.1px;top:380.3px;font-size:6.4px;color:#979797">21</div>
<div class="a " style="left:598.3px;top:405.5px;width:1.7px;height:0.9px;background:#707070"></div>
<div class="a t " style="left:601.1px;top:402.6px;font-size:6.4px;color:#979797">24</div>
<div class="a " style="left:598.3px;top:435.4px;width:1.7px;height:0.9px;background:#707070"></div>
<div class="a t " style="left:601.1px;top:432.5px;font-size:6.4px;color:#979797">30</div>
<div class="a " style="left:598.3px;top:459.9px;width:1.7px;height:0.9px;background:#707070"></div>
<div class="a t " style="left:601.1px;top:457px;font-size:6.4px;color:#979797">35</div>
<div class="a " style="left:598.3px;top:484.6px;width:1.7px;height:0.9px;background:#707070"></div>
<div class="a t " style="left:601.1px;top:481.7px;font-size:6.4px;color:#979797">40</div>
<div class="a " style="left:598.3px;top:511px;width:1.7px;height:0.9px;background:#707070"></div>
<div class="a t " style="left:601.1px;top:508.1px;font-size:6.4px;color:#979797">45</div>
<div class="a " style="left:598.3px;top:536.5px;width:1.7px;height:0.9px;background:#707070"></div>
<div class="a t " style="left:601.1px;top:533.6px;font-size:6.4px;color:#979797">50</div>
<div class="a " style="left:598.3px;top:561.1px;width:1.7px;height:0.9px;background:#707070"></div>
<div class="a t " style="left:601.1px;top:558.2px;font-size:6.4px;color:#979797">60</div>
<div class="a cap" style="left:566px;top:308px;width:15.3px;height:32.2px;"></div>
<div class="a " style="left:552.1px;top:577.5px;width:61.4px;height:38px;background:#a8cb1c"></div>
<div class="a t " style="left:552.1px;top:582.6px;width:60.4px;text-align:center;font-size:8.6px;line-height:11.6px;color:#eef6ee">Stereo Out<br>32</div>
<div class="a " style="left:612.5px;top:577.5px;width:1px;height:38px;background:rgba(0,0,0,0.25)"></div>
<div class="a " style="left:613.5px;top:93.2px;width:61.4px;height:484.3px;background:#4b4b4b"></div>
<div class="a " style="left:673.9px;top:93.2px;width:1px;height:522.3px;background:#383838"></div>
<div class="a " style="left:619.4px;top:100.1px;width:23.6px;height:23.9px;background:#434343;border-radius:3.5px;border:1px solid #393939;box-sizing:border-box"></div>
<svg class="a" style="left:619.4px;top:100.1px;" width="23.6" height="23.9" viewBox="0 0 23.6 23.9"><path d="M3.9 14.8 L7.5 14.8 M10.2 13.4 L13 9.9 M15.7 8.5 L19.2 8.5" stroke="#fff" stroke-width="1" fill="none"/><circle cx="9.1" cy="14.7" r="1.65" stroke="#fff" stroke-width="0.95" fill="none"/><circle cx="14.1" cy="8.5" r="1.65" stroke="#fff" stroke-width="0.95" fill="none"/></svg>
<div class="a " style="left:619.4px;top:128.2px;width:23.6px;height:24.4px;background:#434343;border-radius:3.5px;border:1px solid #393939;box-sizing:border-box"></div>
<div class="a t " style="left:619.4px;top:135.8px;width:24px;text-align:center;font-size:10px;font-weight:bold;color:#f2f2f2">M</div>
<div class="a " style="left:634.8px;top:225px;width:12.1px;height:337px;background:#4e4e4e"></div>
<div class="a " style="left:633.9px;top:224.5px;width:0.85px;height:337px;background:#383838"></div>
<div class="a " style="left:625px;top:226.5px;width:9px;height:1px;background:#656565"></div>
<div class="a " style="left:625px;top:279.5px;width:9px;height:1px;background:#656565"></div>
<div class="a " style="left:625px;top:361px;width:9px;height:1px;background:#656565"></div>
<div class="a " style="left:625px;top:391.8px;width:9px;height:1px;background:#656565"></div>
<div class="a " style="left:625px;top:427px;width:9px;height:1px;background:#656565"></div>
<div class="a " style="left:625px;top:460.2px;width:9px;height:1px;background:#656565"></div>
<div class="a " style="left:625px;top:484.8px;width:9px;height:1px;background:#656565"></div>
<div class="a " style="left:625px;top:518.1px;width:9px;height:1px;background:#656565"></div>
<div class="a " style="left:625px;top:536.5px;width:9px;height:1px;background:#656565"></div>
<div class="a " style="left:625px;top:546.9px;width:9px;height:1px;background:#656565"></div>
<div class="a " style="left:625px;top:552.7px;width:9px;height:1px;background:#656565"></div>
<div class="a " style="left:625px;top:559.8px;width:9px;height:1px;background:#656565"></div>
<div class="a " style="left:632.1px;top:244.2px;width:2px;height:1px;background:#656565"></div>
<div class="a " style="left:632.1px;top:261.7px;width:2px;height:1px;background:#656565"></div>
<div class="a " style="left:632.1px;top:370.8px;width:2px;height:1px;background:#656565"></div>
<div class="a " style="left:632.1px;top:381.2px;width:2px;height:1px;background:#656565"></div>
<div class="a " style="left:632.1px;top:403.2px;width:2px;height:1px;background:#656565"></div>
<div class="a " style="left:632.1px;top:410.9px;width:2px;height:1px;background:#656565"></div>
<div class="a " style="left:632.1px;top:418.7px;width:2px;height:1px;background:#656565"></div>
<div class="a " style="left:632.1px;top:442.1px;width:2px;height:1px;background:#656565"></div>
<div class="a " style="left:632.1px;top:451.4px;width:2px;height:1px;background:#656565"></div>
<div class="a " style="left:632.1px;top:469.4px;width:2px;height:1px;background:#656565"></div>
<div class="a " style="left:632.1px;top:478.3px;width:2px;height:1px;background:#656565"></div>
<div class="a " style="left:632.1px;top:504.3px;width:2px;height:1px;background:#656565"></div>
<div class="a " style="left:632.1px;top:528.1px;width:2px;height:1px;background:#656565"></div>
<div class="a " style="left:625px;top:323.5px;width:9px;height:1.5px;background:#e6e6e6"></div>
<div class="a " style="left:647.2px;top:224.2px;width:11.6px;height:338.2px;background:#383838"></div>
<div class="a " style="left:648px;top:325.6px;width:4.3px;height:236.1px;background:#55dd6b"></div>
<div class="a " style="left:648px;top:293.1px;width:4.3px;height:1.8px;background:#b4b13c"></div>
<div class="a " style="left:653.3px;top:319px;width:4.6px;height:242.7px;background:#55dd6b"></div>
<div class="a " style="left:653.3px;top:292.1px;width:4.6px;height:1.8px;background:#b4b13c"></div>
<div class="a " style="left:659.7px;top:225.1px;width:1.7px;height:0.9px;background:#707070"></div>
<div class="a t " style="left:662.5px;top:222.2px;font-size:6.4px;color:#979797">0</div>
<div class="a " style="left:659.7px;top:247.5px;width:1.7px;height:0.9px;background:#707070"></div>
<div class="a t " style="left:662.5px;top:244.6px;font-size:6.4px;color:#979797">3</div>
<div class="a " style="left:659.7px;top:271px;width:1.7px;height:0.9px;background:#707070"></div>
<div class="a t " style="left:662.5px;top:268.1px;font-size:6.4px;color:#979797">6</div>
<div class="a " style="left:659.7px;top:292.5px;width:1.7px;height:0.9px;background:#707070"></div>
<div class="a t " style="left:662.5px;top:289.6px;font-size:6.4px;color:#979797">9</div>
<div class="a " style="left:659.7px;top:315.7px;width:1.7px;height:0.9px;background:#707070"></div>
<div class="a t " style="left:662.5px;top:312.8px;font-size:6.4px;color:#979797">12</div>
<div class="a " style="left:659.7px;top:338.1px;width:1.7px;height:0.9px;background:#707070"></div>
<div class="a t " style="left:662.5px;top:335.2px;font-size:6.4px;color:#979797">15</div>
<div class="a " style="left:659.7px;top:360.6px;width:1.7px;height:0.9px;background:#707070"></div>
<div class="a t " style="left:662.5px;top:357.7px;font-size:6.4px;color:#979797">18</div>
<div class="a " style="left:659.7px;top:383.2px;width:1.7px;height:0.9px;background:#707070"></div>
<div class="a t " style="left:662.5px;top:380.3px;font-size:6.4px;color:#979797">21</div>
<div class="a " style="left:659.7px;top:405.5px;width:1.7px;height:0.9px;background:#707070"></div>
<div class="a t " style="left:662.5px;top:402.6px;font-size:6.4px;color:#979797">24</div>
<div class="a " style="left:659.7px;top:435.4px;width:1.7px;height:0.9px;background:#707070"></div>
<div class="a t " style="left:662.5px;top:432.5px;font-size:6.4px;color:#979797">30</div>
<div class="a " style="left:659.7px;top:459.9px;width:1.7px;height:0.9px;background:#707070"></div>
<div class="a t " style="left:662.5px;top:457px;font-size:6.4px;color:#979797">35</div>
<div class="a " style="left:659.7px;top:484.6px;width:1.7px;height:0.9px;background:#707070"></div>
<div class="a t " style="left:662.5px;top:481.7px;font-size:6.4px;color:#979797">40</div>
<div class="a " style="left:659.7px;top:511px;width:1.7px;height:0.9px;background:#707070"></div>
<div class="a t " style="left:662.5px;top:508.1px;font-size:6.4px;color:#979797">45</div>
<div class="a " style="left:659.7px;top:536.5px;width:1.7px;height:0.9px;background:#707070"></div>
<div class="a t " style="left:662.5px;top:533.6px;font-size:6.4px;color:#979797">50</div>
<div class="a " style="left:659.7px;top:561.1px;width:1.7px;height:0.9px;background:#707070"></div>
<div class="a t " style="left:662.5px;top:558.2px;font-size:6.4px;color:#979797">60</div>
<div class="a cap" style="left:627.4px;top:308px;width:15.3px;height:32.2px;"></div>
<div class="a " style="left:613.5px;top:577.5px;width:61.4px;height:38px;background:#cea922"></div>
<div class="a t " style="left:613.5px;top:582.6px;width:60.4px;text-align:center;font-size:8.6px;line-height:11.6px;color:#eef6ee">Master</div>
<div class="a " style="left:673.9px;top:577.5px;width:1px;height:38px;background:rgba(0,0,0,0.25)"></div>
<div class="a " style="left:674.9px;top:93.2px;width:146.6px;height:522.3px;background:linear-gradient(to bottom,#484848,#434343)"></div>
<div class="a " style="left:748.3px;top:93.2px;width:1px;height:522.3px;background:#3b3b3b"></div>
<div class="a " style="left:687.3px;top:100px;width:48.2px;height:24.1px;background:#444;border:1px solid #434343;border-radius:3.5px;box-sizing:border-box"></div>
<div class="a t " style="left:687.3px;top:103.4px;width:48.2px;text-align:center;font-size:7.3px;line-height:9.8px;color:#707070;-webkit-text-stroke:0.25px #707070">RESET<br>MUTE</div>
<div class="a " style="left:688.8px;top:128.3px;width:48.2px;height:24.5px;background:#3c3c3c;border:1px solid #393939;border-radius:3.5px;box-sizing:border-box"></div>
<div class="a t " style="left:688.8px;top:131.9px;width:48.2px;text-align:center;font-size:7.4px;line-height:9.2px;color:#f4f4f4;-webkit-text-stroke:0.25px #f4f4f4">RECALL<br>SOLO</div>
<div class="a " style="left:761px;top:128.3px;width:49px;height:24.5px;background:#3c3c3c;border:1px solid #393939;border-radius:3.5px;box-sizing:border-box"></div>
<div class="a " style="left:785.2px;top:128.3px;width:1px;height:24.5px;background:#393939"></div>
<div class="a t " style="left:761px;top:136.1px;width:24.5px;text-align:center;font-size:10px;font-weight:bold;color:#f2f2f2">M</div>
<div class="a t " style="left:785.5px;top:136.1px;width:24.5px;text-align:center;font-size:10px;font-weight:bold;color:#f2f2f2">DIM</div>
<div class="a " style="left:687.2px;top:264.5px;width:48.4px;height:136.1px;background:#3d3d3d;border-radius:3.5px;overflow:hidden"></div>
<div class="a t " style="left:687.2px;top:273.1px;width:48.4px;text-align:center;font-size:7.8px;line-height:9.6px;color:#f0f0f0">MIDI FX</div>
<div class="a " style="left:687.2px;top:292px;width:48.4px;height:0.8px;background:#363636"></div>
<div class="a t " style="left:687.2px;top:300.6px;width:48.4px;text-align:center;font-size:7.8px;line-height:9.6px;color:#f0f0f0">I/O</div>
<div class="a " style="left:687.2px;top:319.2px;width:48.4px;height:0.8px;background:#363636"></div>
<div class="a t " style="left:687.2px;top:323.6px;width:48.4px;text-align:center;font-size:7.8px;line-height:9.6px;color:#f0f0f0">AUDIO FX<br>1-13</div>
<div class="a " style="left:687.2px;top:346.4px;width:48.4px;height:0.8px;background:#363636"></div>
<div class="a t " style="left:687.2px;top:350.8px;width:48.4px;text-align:center;font-size:7.8px;line-height:9.6px;color:#f0f0f0">SENDS<br>1-6</div>
<div class="a " style="left:687.2px;top:373.5px;width:48.4px;height:27.1px;background:#5e5e5e;border-radius:0 0 3.5px 3.5px"></div>
<div class="a " style="left:687.2px;top:373.5px;width:48.4px;height:0.8px;background:#363636"></div>
<div class="a t " style="left:687.2px;top:377.9px;width:48.4px;text-align:center;font-size:7.8px;line-height:9.6px;color:#f0f0f0">PAN &amp;<br>VOLUME</div>
<div class="a " style="left:777px;top:171.5px;width:1px;height:389px;background:#333"></div>
<div class="a " style="left:769px;top:174.1px;width:7.5px;height:1px;background:#707070"></div>
<div class="a t " style="left:738px;top:170.4px;width:29.5px;text-align:right;font-size:6.6px;color:#979797">6</div>
<div class="a " style="left:769px;top:234px;width:7.5px;height:1px;background:#707070"></div>
<div class="a t " style="left:738px;top:230.3px;width:29.5px;text-align:right;font-size:6.6px;color:#979797">3</div>
<div class="a " style="left:769px;top:285.7px;width:7.5px;height:1px;background:#707070"></div>
<div class="a t " style="left:738px;top:282px;width:29.5px;text-align:right;font-size:6.6px;color:#979797">0</div>
<div class="a " style="left:769px;top:329.3px;width:7.5px;height:1px;background:#707070"></div>
<div class="a t " style="left:738px;top:325.6px;width:29.5px;text-align:right;font-size:6.6px;color:#979797">3</div>
<div class="a " style="left:769px;top:364.5px;width:7.5px;height:1px;background:#707070"></div>
<div class="a t " style="left:738px;top:360.8px;width:29.5px;text-align:right;font-size:6.6px;color:#979797">6</div>
<div class="a " style="left:769px;top:405.3px;width:7.5px;height:1px;background:#707070"></div>
<div class="a t " style="left:738px;top:401.6px;width:29.5px;text-align:right;font-size:6.6px;color:#979797">10</div>
<div class="a " style="left:769px;top:443.7px;width:7.5px;height:1px;background:#707070"></div>
<div class="a t " style="left:738px;top:440px;width:29.5px;text-align:right;font-size:6.6px;color:#979797">15</div>
<div class="a " style="left:769px;top:472.5px;width:7.5px;height:1px;background:#707070"></div>
<div class="a t " style="left:738px;top:468.8px;width:29.5px;text-align:right;font-size:6.6px;color:#979797">20</div>
<div class="a " style="left:769px;top:510.5px;width:7.5px;height:1px;background:#707070"></div>
<div class="a t " style="left:738px;top:506.8px;width:29.5px;text-align:right;font-size:6.6px;color:#979797">30</div>
<div class="a " style="left:769px;top:532px;width:7.5px;height:1px;background:#707070"></div>
<div class="a t " style="left:738px;top:528.3px;width:29.5px;text-align:right;font-size:6.6px;color:#979797">40</div>
<div class="a " style="left:769px;top:543.2px;width:7.5px;height:1px;background:#707070"></div>
<div class="a t " style="left:738px;top:539.5px;width:29.5px;text-align:right;font-size:6.6px;color:#979797">50</div>
<div class="a " style="left:769px;top:550.5px;width:7.5px;height:1px;background:#707070"></div>
<div class="a t " style="left:738px;top:546.8px;width:29.5px;text-align:right;font-size:6.6px;color:#979797">60</div>
<div class="a " style="left:769px;top:558.1px;width:7.5px;height:1px;background:#707070"></div>
<div class="a t " style="left:738px;top:551.4px;width:29.5px;text-align:right;font-size:11px;color:#979797">∞</div>
<div class="a " style="left:775.3px;top:212.5px;width:1.8px;height:1px;background:#6a6a6a"></div>
<div class="a " style="left:775.3px;top:256.5px;width:1.8px;height:1px;background:#6a6a6a"></div>
<div class="a " style="left:775.3px;top:266.5px;width:1.8px;height:1px;background:#6a6a6a"></div>
<div class="a " style="left:775.3px;top:343.5px;width:1.8px;height:1px;background:#6a6a6a"></div>
<div class="a " style="left:775.3px;top:352.5px;width:1.8px;height:1px;background:#6a6a6a"></div>
<div class="a " style="left:775.3px;top:358.5px;width:1.8px;height:1px;background:#6a6a6a"></div>
<div class="a " style="left:775.3px;top:368.5px;width:1.8px;height:1px;background:#6a6a6a"></div>
<div class="a " style="left:775.3px;top:383.5px;width:1.8px;height:1px;background:#6a6a6a"></div>
<div class="a " style="left:775.3px;top:389.5px;width:1.8px;height:1px;background:#6a6a6a"></div>
<div class="a " style="left:775.3px;top:421.5px;width:1.8px;height:1px;background:#6a6a6a"></div>
<div class="a " style="left:775.3px;top:454.5px;width:1.8px;height:1px;background:#6a6a6a"></div>
<div class="a " style="left:775.3px;top:486.5px;width:1.8px;height:1px;background:#6a6a6a"></div>
<div class="a " style="left:775.3px;top:523.5px;width:1.8px;height:1px;background:#6a6a6a"></div>
<div class="a " style="left:789.8px;top:171.5px;width:12px;height:389px;background:#383838"></div>
<div class="a " style="left:791.2px;top:290.8px;width:4.2px;height:269.1px;background:#55dd6b"></div>
<div class="a " style="left:796.6px;top:283.3px;width:4.4px;height:276.6px;background:#55dd6b"></div>
<div class="a " style="left:791.2px;top:253.4px;width:4.2px;height:1.3px;background:#c8c42a"></div>
<div class="a " style="left:796.6px;top:251.8px;width:4.4px;height:1.3px;background:#c8c42a"></div>
<div class="a " style="left:802.4px;top:174.3px;width:2px;height:0.9px;background:#7a7a7a"></div>
<div class="a t " style="left:805.2px;top:171.1px;font-size:6.4px;color:#979797">0</div>
<div class="a " style="left:802.4px;top:199.7px;width:2px;height:0.9px;background:#7a7a7a"></div>
<div class="a t " style="left:805.2px;top:196.5px;font-size:6.4px;color:#979797">3</div>
<div class="a " style="left:802.4px;top:225.7px;width:2px;height:0.9px;background:#7a7a7a"></div>
<div class="a t " style="left:805.2px;top:222.5px;font-size:6.4px;color:#979797">6</div>
<div class="a " style="left:802.4px;top:250.2px;width:2px;height:0.9px;background:#7a7a7a"></div>
<div class="a t " style="left:805.2px;top:247px;font-size:6.4px;color:#979797">9</div>
<div class="a " style="left:802.4px;top:276.4px;width:2px;height:0.9px;background:#7a7a7a"></div>
<div class="a t " style="left:805.2px;top:273.2px;font-size:6.4px;color:#979797">12</div>
<div class="a " style="left:802.4px;top:303px;width:2px;height:0.9px;background:#7a7a7a"></div>
<div class="a t " style="left:805.2px;top:299.8px;font-size:6.4px;color:#979797">15</div>
<div class="a " style="left:802.4px;top:327.7px;width:2px;height:0.9px;background:#7a7a7a"></div>
<div class="a t " style="left:805.2px;top:324.5px;font-size:6.4px;color:#979797">18</div>
<div class="a " style="left:802.4px;top:353.4px;width:2px;height:0.9px;background:#7a7a7a"></div>
<div class="a t " style="left:805.2px;top:350.2px;font-size:6.4px;color:#979797">21</div>
<div class="a " style="left:802.4px;top:379.2px;width:2px;height:0.9px;background:#7a7a7a"></div>
<div class="a t " style="left:805.2px;top:376px;font-size:6.4px;color:#979797">24</div>
<div class="a " style="left:802.4px;top:412.7px;width:2px;height:0.9px;background:#7a7a7a"></div>
<div class="a t " style="left:805.2px;top:409.5px;font-size:6.4px;color:#979797">30</div>
<div class="a " style="left:802.4px;top:441.2px;width:2px;height:0.9px;background:#7a7a7a"></div>
<div class="a t " style="left:805.2px;top:438px;font-size:6.4px;color:#979797">35</div>
<div class="a " style="left:802.4px;top:469.2px;width:2px;height:0.9px;background:#7a7a7a"></div>
<div class="a t " style="left:805.2px;top:466px;font-size:6.4px;color:#979797">40</div>
<div class="a " style="left:802.4px;top:499.1px;width:2px;height:0.9px;background:#7a7a7a"></div>
<div class="a t " style="left:805.2px;top:495.9px;font-size:6.4px;color:#979797">45</div>
<div class="a " style="left:802.4px;top:528.4px;width:2px;height:0.9px;background:#7a7a7a"></div>
<div class="a t " style="left:805.2px;top:525.2px;font-size:6.4px;color:#979797">50</div>
<div class="a " style="left:802.4px;top:558.1px;width:2px;height:0.9px;background:#7a7a7a"></div>
<div class="a t " style="left:805.2px;top:554.9px;font-size:6.4px;color:#979797">60</div>
<div class="a cap" style="left:770px;top:269.2px;width:15.6px;height:32.4px;"></div>
<div class="a t " style="left:750px;top:581px;width:73px;text-align:center;font-size:8.9px;line-height:11.6px;color:#c4c4c4">Master<br>+0.0</div>
<div class="a " style="left:307px;top:607.9px;width:207.5px;height:2.8px;background:#f4f4f4;border-radius:2px"></div>
</div>
</body></html>
